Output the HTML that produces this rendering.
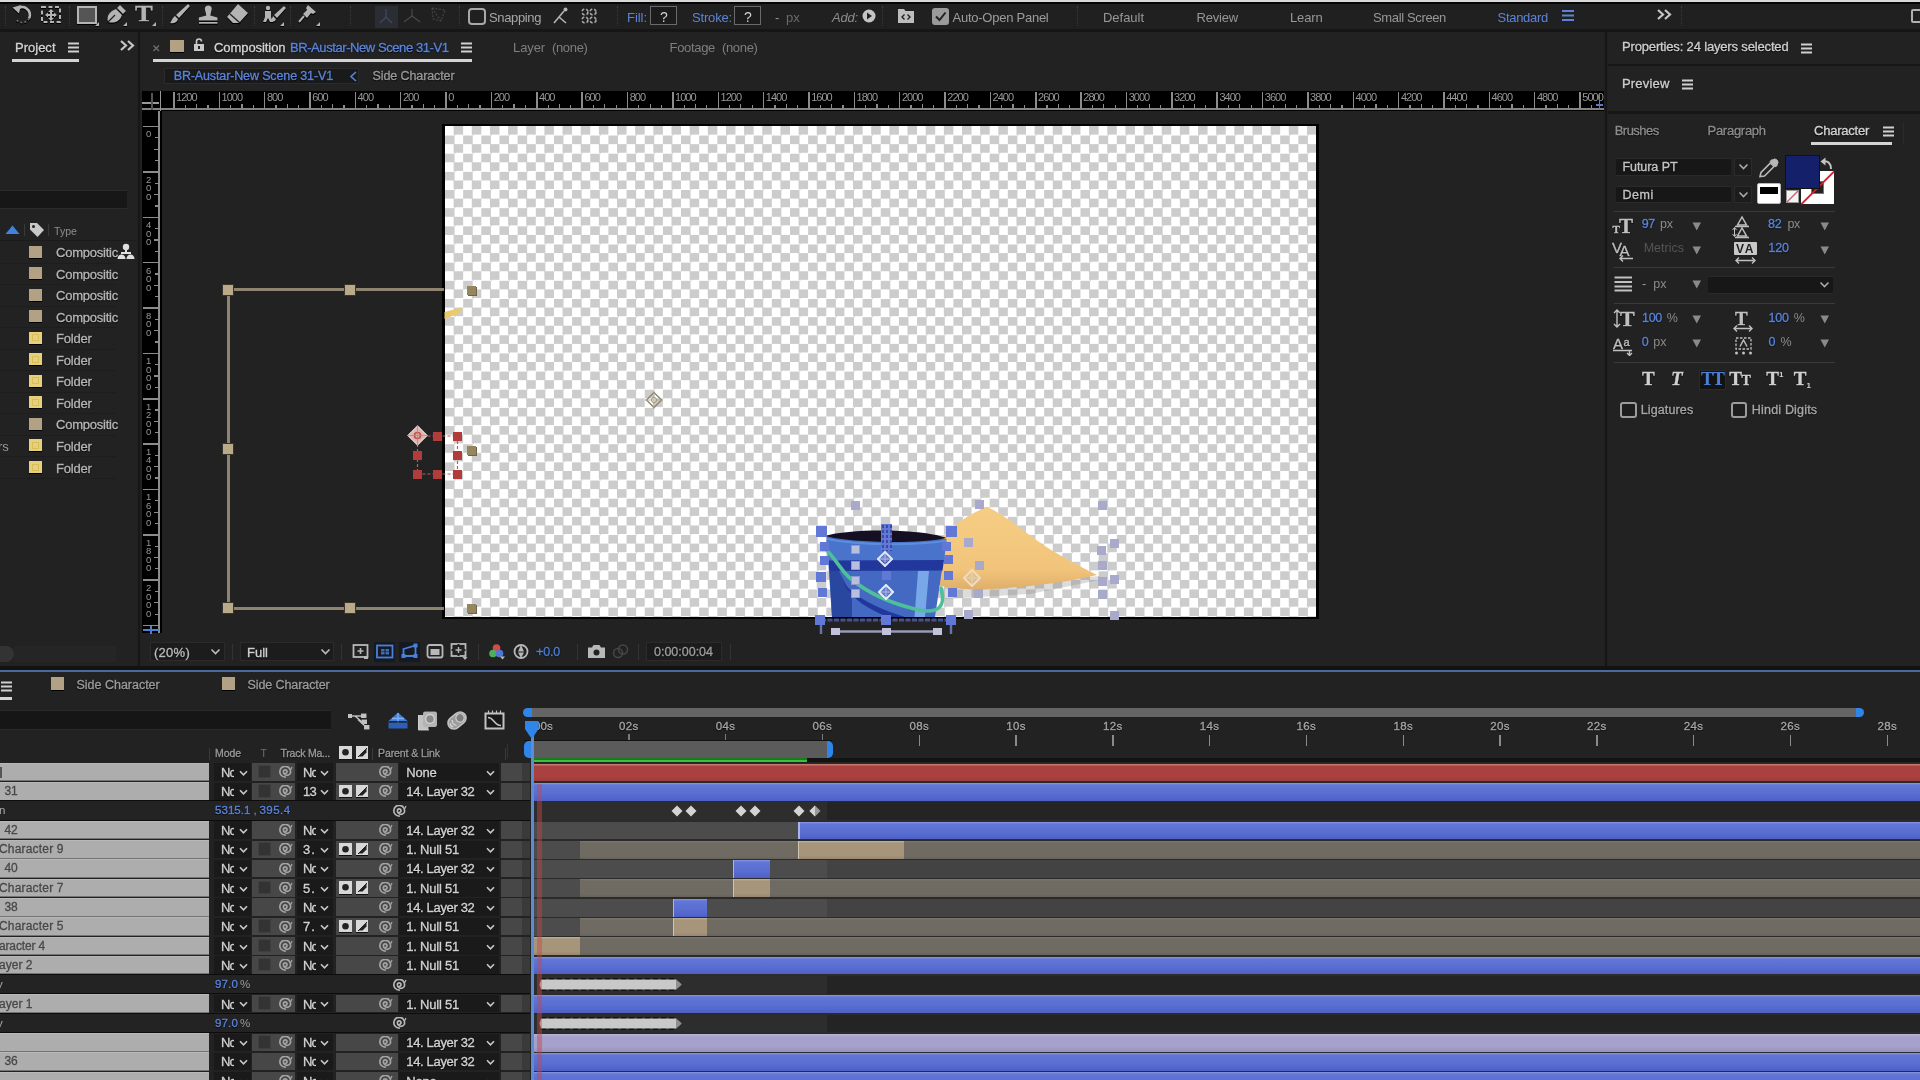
<!DOCTYPE html>
<html><head><meta charset="utf-8"><title>After Effects</title>
<style>
html,body{margin:0;padding:0;background:#222;}
body{width:1920px;height:1080px;position:relative;overflow:hidden;font-family:"Liberation Sans",sans-serif;}
div,svg{position:absolute;box-sizing:border-box;}
.t{white-space:nowrap;line-height:1;letter-spacing:-0.2px;}
.sh{text-shadow:0 0 1px #000,0 1px 1px #000;-webkit-text-stroke:0.35px;}
</style></head>
<body>
<div id="w" style="left:0;top:0;width:1920px;height:1080px;will-change:transform;overflow:hidden;">
<!-- top -->
<div style="left:0px;top:0px;width:1920px;height:2px;background:#d9d9d9;"></div>
<div style="left:0px;top:2px;width:1920px;height:2px;background:#050505;"></div>
<div style="left:0px;top:4px;width:1920px;height:26px;background:#202020;"></div>
<div style="left:0px;top:29px;width:1920px;height:3px;background:#161616;"></div>
<div style="left:5px;top:6px;width:1px;height:20px;border-left:1px dotted #3a3a3a;"></div>
<div style="left:69px;top:6px;width:1px;height:20px;border-left:1px dotted #3a3a3a;"></div>
<div style="left:162px;top:6px;width:1px;height:20px;border-left:1px dotted #3a3a3a;"></div>
<div style="left:254px;top:6px;width:1px;height:20px;border-left:1px dotted #3a3a3a;"></div>
<div style="left:290px;top:6px;width:1px;height:20px;border-left:1px dotted #3a3a3a;"></div>
<div style="left:350px;top:6px;width:1px;height:20px;border-left:1px dotted #3a3a3a;"></div>
<div style="left:459px;top:6px;width:1px;height:20px;border-left:1px dotted #3a3a3a;"></div>
<div style="left:617px;top:6px;width:1px;height:20px;border-left:1px dotted #3a3a3a;"></div>
<div style="left:882px;top:6px;width:1px;height:20px;border-left:1px dotted #3a3a3a;"></div>
<div style="left:1077px;top:6px;width:1px;height:20px;border-left:1px dotted #3a3a3a;"></div>
<div style="left:1681px;top:6px;width:1px;height:20px;border-left:1px dotted #3a3a3a;"></div>
<svg style="left:0px;top:0px;filter:drop-shadow(0 0 0.7px #000) drop-shadow(0 1px 0.5px #000);" width="330" height="32" viewBox="0 0 330 32"><path d="M16 10 A7.800 7.800 0 0 1 29 18.500" fill="none" stroke="#b4b4b4" stroke-width="2.600"/><path d="M29 18.500 A7.800 7.800 0 0 1 15.500 18.500" fill="none" stroke="#6a6a6a" stroke-width="2" stroke-dasharray="2 2"/><path d="M12.500 7.500 L21 5 L19 13.500 Z" fill="#b4b4b4"/><rect x="42" y="7" width="18" height="15" fill="none" stroke="#b4b4b4" stroke-width="2" stroke-dasharray="4 2.5"/><path d="M51 9 L54 12 L52 12 L52 14 L54 14 L54 12.5 L57 15 L54 17.5 L54 16 L52 16 L52 18 L54 18 L51 21 L48 18 L50 18 L50 16 L48 16 L48 17.5 L45 15 L48 12.5 L48 14 L50 14 L50 12 L48 12 Z" fill="#b4b4b4"/><rect x="78" y="7" width="18" height="16" fill="#555" stroke="#b4b4b4" stroke-width="2"/><path d="M99 22 L99 26 L95 26 Z" fill="#b4b4b4"/><path d="M108 22 C106 16 110 11 116 9 L122 15 C120 21 115 24 108 22 Z" fill="#b4b4b4"/><path d="M117 8 L120 5 L126 11 L123 14 Z" fill="#b4b4b4"/><path d="M108 22 L115 15" stroke="#222" stroke-width="1.2"/><path d="M127 22 L127 26 L123 26 Z" fill="#b4b4b4"/><path d="M188 4 L190 6 L179 18 L176 15 Z" fill="#b4b4b4"/><path d="M175 16 L178 19 C177 23 173 24 170 23 C172 21 172 18 175 16 Z" fill="#b4b4b4"/><path d="M204.800 9 a3.500 3.500 0 1 1 7 0 L210.300 15.500 L217.500 17.500 L217.500 20.500 L198.800 20.500 L198.800 17.500 L206.300 15.500 Z" fill="#b4b4b4"/><rect x="199" y="22" width="18.500" height="1.700" fill="#b4b4b4"/><path d="M238 4 L248 13 L239 23 L233 23 L227 17 Z" fill="#b4b4b4"/><path d="M230 14 L240 23" stroke="#222" stroke-width="1.3"/><circle cx="268" cy="8" r="2.2" fill="#b4b4b4"/><path d="M265 11 L271 11 L271 17 L273 22 L270 22 L268 18 L266 22 L263 22 L265 17 Z" fill="#b4b4b4"/><path d="M284 6 L286 8 L277 18 L274 15 Z" fill="#b4b4b4"/><path d="M273 16 L276 19 C275 22 273 22 271 21 Z" fill="#b4b4b4"/><path d="M284 22 L284 26 L280 26 Z" fill="#b4b4b4"/><path d="M308 5 L316 12 L313 14 L311 13 L307 18 L303 14 L307 10 L306 8 Z" fill="#b4b4b4"/><path d="M304 16 L299 22" stroke="#b4b4b4" stroke-width="2"/><path d="M320 22 L320 26 L316 26 Z" fill="#b4b4b4"/></svg>
<div class="t sh" style="left:134.5px;top:2.41px;font-size:23.5px;color:#b4b4b4;font-weight:bold;font-family:'Liberation Serif',serif;transform-origin:0 50%;transform:scaleX(1.13);">T</div>
<svg style="left:150px;top:20px;" width="8" height="8" viewBox="0 0 8 8"><path d="M6 2 L6 6 L2 6 Z" fill="#b4b4b4"/></svg>
<div style="left:375px;top:6px;width:23px;height:22px;background:#2a2d33;"></div>
<svg style="left:370px;top:0px;" width="90" height="32" viewBox="0 0 90 32"><path d="M386 9 L386 17 L380 23 M386 17 L392 23" stroke="#3e4656" stroke-width="1.5" fill="none" transform="translate(-370,0)"/><path d="M412 9 L412 16 L404 22 M412 16 L420 22" stroke="#4a4a4a" stroke-width="1.2" fill="none" transform="translate(-370,0)"/><path d="M432 8 L445 10 L441 21 L433 19 Z M432 8 L441 21" stroke="#444" stroke-width="1.2" stroke-dasharray="2 1.5" fill="none" transform="translate(-370,0)"/></svg>
<div style="left:468px;top:8px;width:18px;height:17px;border:2.5px solid #a8a8a8;border-radius:4px;"></div>
<div class="t" style="left:489px;top:11.00px;font-size:13px;color:#a6a6a6;letter-spacing:-0.368px;">Snapping</div>
<svg style="left:550px;top:4px;" width="50" height="24" viewBox="0 0 50 24"><path d="M4 19 L14 7 M9 13 L16 19" stroke="#b4b4b4" stroke-width="1.6" fill="none"/><circle cx="15.5" cy="5.5" r="2" fill="#b4b4b4"/><g fill="none" stroke="#aaa" stroke-width="1.6" stroke-dasharray="3 2"><circle cx="35" cy="8" r="3"/><circle cx="43" cy="8" r="3"/><circle cx="35" cy="16" r="3"/><circle cx="43" cy="16" r="3"/></g></svg>
<div class="t" style="left:627px;top:11.00px;font-size:13px;color:#5b84d8;letter-spacing:-0.044px;">Fill:</div>
<div style="left:650px;top:6px;width:27px;height:19px;background:#1c1c1c;border:1.5px solid #6a6a6a;"></div>
<div class="t" style="left:660px;top:10.15px;font-size:14px;color:#d0d0d0;">?</div>
<div class="t" style="left:692px;top:11.00px;font-size:13px;color:#5b84d8;letter-spacing:-0.169px;">Stroke:</div>
<div style="left:734px;top:6px;width:27px;height:19px;background:#1c1c1c;border:1.5px solid #6a6a6a;"></div>
<div class="t" style="left:744px;top:10.15px;font-size:14px;color:#d0d0d0;">?</div>
<div class="t" style="left:775px;top:11.00px;font-size:13px;color:#999;">-</div>
<div class="t" style="left:786px;top:11.00px;font-size:13px;color:#6a6a6a;letter-spacing:0.135px;">px</div>
<div class="t" style="left:832px;top:11.00px;font-size:13px;color:#8c8c8c;letter-spacing:-0.186px;font-style:italic;">Add:</div>
<svg style="left:861px;top:8px;" width="16" height="16" viewBox="0 0 16 16"><circle cx="8" cy="8" r="6.5" fill="#c4c4c4"/><path d="M6 4.500 L11 8 L6 11.500 Z" fill="#222"/></svg>
<svg style="left:897px;top:6px;" width="20" height="20" viewBox="0 0 20 20"><path d="M1 3 L7 3 L8.500 5 L17 5 L17 17 L1 17 Z" fill="#bdbdbd"/><path d="M7.500 8.500 L5 11 L7.500 13.500 M10.500 8.500 L13 11 L10.500 13.500" stroke="#222" stroke-width="1.4" fill="none"/></svg>
<div style="left:932px;top:8px;width:17px;height:17px;background:#9a9a9a;border-radius:3px;"></div>
<svg style="left:932px;top:8px;" width="17" height="17" viewBox="0 0 17 17"><path d="M4 8.500 L7.500 12 L13.500 4.500" stroke="#222" stroke-width="2" fill="none"/></svg>
<div class="t" style="left:952.5px;top:11.00px;font-size:13px;color:#9c9c9c;letter-spacing:-0.249px;">Auto-Open Panel</div>
<div class="t" style="left:1103px;top:11.00px;font-size:13px;color:#979797;letter-spacing:-0.027px;">Default</div>
<div class="t" style="left:1196.5px;top:11.00px;font-size:13px;color:#979797;letter-spacing:-0.188px;">Review</div>
<div class="t" style="left:1290px;top:11.00px;font-size:13px;color:#979797;letter-spacing:-0.150px;">Learn</div>
<div class="t" style="left:1373px;top:11.00px;font-size:13px;color:#979797;letter-spacing:-0.360px;">Small Screen</div>
<div class="t" style="left:1497.5px;top:11.00px;font-size:13px;color:#5b84d8;letter-spacing:-0.283px;">Standard</div>
<svg style="left:1562px;top:9px;" width="12" height="13" viewBox="0 0 12 13"><path d="M0 2 H12 M0 6.500 H12 M0 11 H12" stroke="#5b84d8" stroke-width="2"/></svg>
<svg style="left:1657px;top:9px;" width="15" height="12" viewBox="0 0 15 12"><path d="M1 1 L6 5.500 L1 10 M8 1 L13 5.500 L8 10" stroke="#c6c6c6" stroke-width="2.2" fill="none"/></svg>
<div style="left:1911px;top:9px;width:14px;height:14px;border:2px solid #b0b0b0;border-radius:2px;"></div>
<!-- project -->
<div style="left:0px;top:32px;width:137px;height:634px;background:#222222;"></div>
<div style="left:137px;top:32px;width:4px;height:634px;background:#202020;"></div>
<div style="left:137.7px;top:32px;width:2.8px;height:634px;background:#171717;"></div>
<div class="t sh" style="left:15px;top:41.30px;font-size:13px;color:#d2d2d2;letter-spacing:0.005px;">Project</div>
<svg style="left:68px;top:42px;" width="12" height="12" viewBox="0 0 12 12"><path d="M0 1.500 H11 M0 5.500 H11 M0 9.500 H11" stroke="#cfcfcf" stroke-width="2"/></svg>
<svg style="left:120px;top:40px;" width="15" height="12" viewBox="0 0 15 12"><path d="M1 1 L6 5.500 L1 10 M8 1 L13 5.500 L8 10" stroke="#c6c6c6" stroke-width="2.2" fill="none"/></svg>
<div style="left:12px;top:58.5px;width:67px;height:3px;background:#d4d4d4;"></div>
<div style="left:0px;top:190px;width:127px;height:19px;background:#171717;border-top:1px solid #2c2c2c;border-bottom:1px solid #2c2c2c;"></div>
<svg style="left:4px;top:224px;" width="17" height="11" viewBox="0 0 17 11"><path d="M1.500 10 L8.500 1.500 L15.500 10 Z" fill="#3f83dd"/></svg>
<div style="left:24px;top:224px;width:1px;height:12px;background:#3a3a3a;"></div>
<svg style="left:28px;top:221px;" width="18" height="18" viewBox="0 0 18 18"><path d="M2 2 L9 2 L16 9 L9.500 16 L2 8.500 Z" fill="#c9c9c9"/><circle cx="5.500" cy="5.500" r="1.500" fill="#222"/></svg>
<div style="left:48px;top:224px;width:1px;height:12px;background:#3a3a3a;"></div>
<div class="t" style="left:54px;top:225.61px;font-size:10.5px;color:#8e8e8e;letter-spacing:0.059px;">Type</div>
<div style="left:0px;top:240px;width:137px;height:1px;background:#1b1b1b;"></div>
<div style="left:29px;top:245.7px;width:12.5px;height:12px;background:#b3a184;box-shadow:0 1px 0 #000;"></div>
<div class="t sh" style="left:56px;top:246.20px;font-size:13px;color:#b5b5b5;letter-spacing:-0.230px;width:62px;overflow:hidden;">Compositic</div>
<div style="left:0px;top:262.7px;width:116px;height:1px;background:#1d1d1d;"></div>
<div style="left:29px;top:267.23px;width:12.5px;height:12px;background:#b3a184;box-shadow:0 1px 0 #000;"></div>
<div class="t sh" style="left:56px;top:267.73px;font-size:13px;color:#b5b5b5;letter-spacing:-0.230px;width:62px;overflow:hidden;">Compositic</div>
<div style="left:0px;top:284.23px;width:116px;height:1px;background:#1d1d1d;"></div>
<div style="left:29px;top:288.76px;width:12.5px;height:12px;background:#b3a184;box-shadow:0 1px 0 #000;"></div>
<div class="t sh" style="left:56px;top:289.26px;font-size:13px;color:#b5b5b5;letter-spacing:-0.230px;width:62px;overflow:hidden;">Compositic</div>
<div style="left:0px;top:305.76px;width:116px;height:1px;background:#1d1d1d;"></div>
<div style="left:29px;top:310.28999999999996px;width:12.5px;height:12px;background:#b3a184;box-shadow:0 1px 0 #000;"></div>
<div class="t sh" style="left:56px;top:310.79px;font-size:13px;color:#b5b5b5;letter-spacing:-0.230px;width:62px;overflow:hidden;">Compositic</div>
<div style="left:0px;top:327.28999999999996px;width:116px;height:1px;background:#1d1d1d;"></div>
<div style="left:29px;top:331.82px;width:12.5px;height:12px;background:#e6d07c;box-shadow:0 1px 0 #000;"></div>
<div style="left:31.5px;top:334.32px;width:7.5px;height:7px;border:1px solid #d9bd5c;"></div>
<div class="t sh" style="left:56px;top:332.32px;font-size:13px;color:#b5b5b5;letter-spacing:-0.225px;">Folder</div>
<div style="left:0px;top:348.82px;width:116px;height:1px;background:#1d1d1d;"></div>
<div style="left:29px;top:353.35px;width:12.5px;height:12px;background:#e6d07c;box-shadow:0 1px 0 #000;"></div>
<div style="left:31.5px;top:355.85px;width:7.5px;height:7px;border:1px solid #d9bd5c;"></div>
<div class="t sh" style="left:56px;top:353.85px;font-size:13px;color:#b5b5b5;letter-spacing:-0.225px;">Folder</div>
<div style="left:0px;top:370.35px;width:116px;height:1px;background:#1d1d1d;"></div>
<div style="left:29px;top:374.88px;width:12.5px;height:12px;background:#e6d07c;box-shadow:0 1px 0 #000;"></div>
<div style="left:31.5px;top:377.38px;width:7.5px;height:7px;border:1px solid #d9bd5c;"></div>
<div class="t sh" style="left:56px;top:375.38px;font-size:13px;color:#b5b5b5;letter-spacing:-0.225px;">Folder</div>
<div style="left:0px;top:391.88px;width:116px;height:1px;background:#1d1d1d;"></div>
<div style="left:29px;top:396.40999999999997px;width:12.5px;height:12px;background:#e6d07c;box-shadow:0 1px 0 #000;"></div>
<div style="left:31.5px;top:398.90999999999997px;width:7.5px;height:7px;border:1px solid #d9bd5c;"></div>
<div class="t sh" style="left:56px;top:396.91px;font-size:13px;color:#b5b5b5;letter-spacing:-0.225px;">Folder</div>
<div style="left:0px;top:413.40999999999997px;width:116px;height:1px;background:#1d1d1d;"></div>
<div style="left:29px;top:417.94px;width:12.5px;height:12px;background:#b3a184;box-shadow:0 1px 0 #000;"></div>
<div class="t sh" style="left:56px;top:418.44px;font-size:13px;color:#b5b5b5;letter-spacing:-0.230px;width:62px;overflow:hidden;">Compositic</div>
<div style="left:0px;top:434.94px;width:116px;height:1px;background:#1d1d1d;"></div>
<div style="left:29px;top:439.47px;width:12.5px;height:12px;background:#e6d07c;box-shadow:0 1px 0 #000;"></div>
<div style="left:31.5px;top:441.97px;width:7.5px;height:7px;border:1px solid #d9bd5c;"></div>
<div class="t sh" style="left:56px;top:439.97px;font-size:13px;color:#b5b5b5;letter-spacing:-0.225px;">Folder</div>
<div style="left:0px;top:456.47px;width:116px;height:1px;background:#1d1d1d;"></div>
<div style="left:29px;top:461.0px;width:12.5px;height:12px;background:#e6d07c;box-shadow:0 1px 0 #000;"></div>
<div style="left:31.5px;top:463.5px;width:7.5px;height:7px;border:1px solid #d9bd5c;"></div>
<div class="t sh" style="left:56px;top:461.50px;font-size:13px;color:#b5b5b5;letter-spacing:-0.225px;">Folder</div>
<div style="left:0px;top:478.0px;width:116px;height:1px;background:#1d1d1d;"></div>
<svg style="left:117px;top:243px;" width="18" height="17" viewBox="0 0 18 17"><circle cx="9" cy="4" r="3.200" fill="#dedede"/><path d="M9 6 L9 10 M4 10 L14 10" stroke="#dedede" stroke-width="2"/><path d="M0.500 16 a4 4.500 0 0 1 8 0 Z M9.500 16 a4 4.500 0 0 1 8 0 Z" fill="#dedede"/></svg>
<div class="t" style="left:-2px;top:439.80px;font-size:13px;color:#9a9a9a;">rs</div>
<div style="left:-10px;top:646px;width:24px;height:16px;background:#333;border-radius:8px;"></div>
<div style="left:14px;top:646px;width:102px;height:16px;background:#252525;"></div>
<!-- comp -->
<div style="left:141px;top:32px;width:1463px;height:634px;background:#222222;"></div>
<div style="left:1604px;top:32px;width:4px;height:634px;background:#202020;"></div>
<div style="left:1604.8px;top:32px;width:2.4px;height:634px;background:#161616;"></div>
<svg style="left:152px;top:44px;" width="9" height="9" viewBox="0 0 9 9"><path d="M1.500 1.500 L7 7 M7 1.500 L1.500 7" stroke="#6e6e6e" stroke-width="1.400"/></svg>
<div style="left:170px;top:39.5px;width:13.5px;height:12.5px;background:#b3a184;box-shadow:0 1px 0 #000;"></div>
<svg style="left:193px;top:38px;" width="12" height="14" viewBox="0 0 12 14"><path d="M3.500 6 L3.500 3.500 a2.500 2.500 0 0 1 5 0" fill="none" stroke="#c8c8c8" stroke-width="1.600"/><rect x="1" y="6" width="10" height="7" fill="#c8c8c8"/><rect x="5" y="8" width="2" height="3" fill="#222"/></svg>
<div class="t sh" style="left:214px;top:40.80px;font-size:13px;color:#d6d6d6;letter-spacing:-0.069px;">Composition</div>
<div class="t sh" style="left:290px;top:40.80px;font-size:13px;color:#5b84d8;letter-spacing:-0.423px;">BR-Austar-New Scene 31-V1</div>
<svg style="left:461px;top:42px;" width="12" height="12" viewBox="0 0 12 12"><path d="M0 1.500 H11 M0 5.500 H11 M0 9.500 H11" stroke="#cfcfcf" stroke-width="2"/></svg>
<div style="left:153px;top:58.5px;width:319px;height:3px;background:#d4d4d4;"></div>
<div class="t" style="left:513px;top:40.80px;font-size:13px;color:#7e7e7e;letter-spacing:-0.104px;">Layer</div>
<div class="t" style="left:552px;top:40.80px;font-size:13px;color:#7e7e7e;letter-spacing:-0.347px;">(none)</div>
<div class="t" style="left:669.5px;top:40.80px;font-size:13px;color:#7e7e7e;letter-spacing:-0.315px;">Footage</div>
<div class="t" style="left:722px;top:40.80px;font-size:13px;color:#7e7e7e;letter-spacing:-0.347px;">(none)</div>
<div style="left:164px;top:67.5px;width:195px;height:16.5px;background:#1a1a1a;border:1px solid #2b2b2b;"></div>
<div class="t sh" style="left:173.7px;top:69.72px;font-size:12.5px;color:#5b84d8;letter-spacing:-0.130px;">BR-Austar-New Scene 31-V1</div>
<svg style="left:349px;top:71px;" width="9" height="11" viewBox="0 0 9 11"><path d="M7 1 L2 5.500 L7 10" stroke="#5b84d8" stroke-width="1.600" fill="none"/></svg>
<div class="t sh" style="left:372.5px;top:69.72px;font-size:12.5px;color:#9a9a9a;letter-spacing:-0.098px;">Side Character</div>
<div style="left:141.5px;top:91px;width:1462px;height:20px;background:#000;"></div>
<div style="left:141.5px;top:108.3px;width:1462px;height:2.2px;background:#848484;"></div>
<div style="left:141.5px;top:111px;width:20px;height:522px;background:#000;"></div>
<div style="left:158.2px;top:111px;width:2.2px;height:522px;background:#8c8c8c;"></div>
<div style="left:142px;top:102px;width:17px;height:1.5px;background:#9a9a9a;"></div>
<div style="left:159.5px;top:91px;width:1.5px;height:20px;background:#9a9a9a;"></div>
<div style="left:151px;top:93px;width:1.5px;height:17px;background:#555;"></div>
<div style="left:173.1px;top:92px;width:1.6px;height:17px;background:#8c8c8c;"></div><div class="t" style="left:176.1px;top:92.29px;font-size:11px;color:#989898;letter-spacing:-0.992px;">1200</div><div style="left:184.6px;top:105.3px;width:1.3px;height:3px;background:#8c8c8c;"></div><div style="left:195.9px;top:104.3px;width:1.3px;height:4px;background:#8c8c8c;"></div><div style="left:207.3px;top:105.3px;width:1.3px;height:3px;background:#8c8c8c;"></div><div style="left:218.5px;top:92px;width:1.6px;height:17px;background:#8c8c8c;"></div><div class="t" style="left:221.5px;top:92.29px;font-size:11px;color:#989898;letter-spacing:-0.992px;">1000</div><div style="left:229.9px;top:105.3px;width:1.3px;height:3px;background:#8c8c8c;"></div><div style="left:241.3px;top:104.3px;width:1.3px;height:4px;background:#8c8c8c;"></div><div style="left:252.6px;top:105.3px;width:1.3px;height:3px;background:#8c8c8c;"></div><div style="left:263.9px;top:92px;width:1.6px;height:17px;background:#8c8c8c;"></div><div class="t" style="left:266.9px;top:92.29px;font-size:11px;color:#989898;letter-spacing:-0.951px;">800</div><div style="left:275.3px;top:105.3px;width:1.3px;height:3px;background:#8c8c8c;"></div><div style="left:286.6px;top:104.3px;width:1.3px;height:4px;background:#8c8c8c;"></div><div style="left:298.0px;top:105.3px;width:1.3px;height:3px;background:#8c8c8c;"></div><div style="left:309.2px;top:92px;width:1.6px;height:17px;background:#8c8c8c;"></div><div class="t" style="left:312.2px;top:92.29px;font-size:11px;color:#989898;letter-spacing:-0.951px;">600</div><div style="left:320.7px;top:105.3px;width:1.3px;height:3px;background:#8c8c8c;"></div><div style="left:332.0px;top:104.3px;width:1.3px;height:4px;background:#8c8c8c;"></div><div style="left:343.3px;top:105.3px;width:1.3px;height:3px;background:#8c8c8c;"></div><div style="left:354.6px;top:92px;width:1.6px;height:17px;background:#8c8c8c;"></div><div class="t" style="left:357.6px;top:92.29px;font-size:11px;color:#989898;letter-spacing:-0.951px;">400</div><div style="left:366.0px;top:105.3px;width:1.3px;height:3px;background:#8c8c8c;"></div><div style="left:377.4px;top:104.3px;width:1.3px;height:4px;background:#8c8c8c;"></div><div style="left:388.7px;top:105.3px;width:1.3px;height:3px;background:#8c8c8c;"></div><div style="left:399.9px;top:92px;width:1.6px;height:17px;background:#8c8c8c;"></div><div class="t" style="left:402.9px;top:92.29px;font-size:11px;color:#989898;letter-spacing:-0.951px;">200</div><div style="left:411.4px;top:105.3px;width:1.3px;height:3px;background:#8c8c8c;"></div><div style="left:422.7px;top:104.3px;width:1.3px;height:4px;background:#8c8c8c;"></div><div style="left:434.1px;top:105.3px;width:1.3px;height:3px;background:#8c8c8c;"></div><div style="left:445.3px;top:92px;width:1.6px;height:17px;background:#8c8c8c;"></div><div class="t" style="left:448.3px;top:92.29px;font-size:11px;color:#989898;letter-spacing:-0.917px;">0</div><div style="left:456.7px;top:105.3px;width:1.3px;height:3px;background:#8c8c8c;"></div><div style="left:468.1px;top:104.3px;width:1.3px;height:4px;background:#8c8c8c;"></div><div style="left:479.4px;top:105.3px;width:1.3px;height:3px;background:#8c8c8c;"></div><div style="left:490.7px;top:92px;width:1.6px;height:17px;background:#8c8c8c;"></div><div class="t" style="left:493.7px;top:92.29px;font-size:11px;color:#989898;letter-spacing:-0.951px;">200</div><div style="left:502.1px;top:105.3px;width:1.3px;height:3px;background:#8c8c8c;"></div><div style="left:513.4px;top:104.3px;width:1.3px;height:4px;background:#8c8c8c;"></div><div style="left:524.8px;top:105.3px;width:1.3px;height:3px;background:#8c8c8c;"></div><div style="left:536.0px;top:92px;width:1.6px;height:17px;background:#8c8c8c;"></div><div class="t" style="left:539.0px;top:92.29px;font-size:11px;color:#989898;letter-spacing:-0.951px;">400</div><div style="left:547.5px;top:105.3px;width:1.3px;height:3px;background:#8c8c8c;"></div><div style="left:558.8px;top:104.3px;width:1.3px;height:4px;background:#8c8c8c;"></div><div style="left:570.1px;top:105.3px;width:1.3px;height:3px;background:#8c8c8c;"></div><div style="left:581.4px;top:92px;width:1.6px;height:17px;background:#8c8c8c;"></div><div class="t" style="left:584.4px;top:92.29px;font-size:11px;color:#989898;letter-spacing:-0.951px;">600</div><div style="left:592.8px;top:105.3px;width:1.3px;height:3px;background:#8c8c8c;"></div><div style="left:604.2px;top:104.3px;width:1.3px;height:4px;background:#8c8c8c;"></div><div style="left:615.5px;top:105.3px;width:1.3px;height:3px;background:#8c8c8c;"></div><div style="left:626.7px;top:92px;width:1.6px;height:17px;background:#8c8c8c;"></div><div class="t" style="left:629.7px;top:92.29px;font-size:11px;color:#989898;letter-spacing:-0.951px;">800</div><div style="left:638.2px;top:105.3px;width:1.3px;height:3px;background:#8c8c8c;"></div><div style="left:649.5px;top:104.3px;width:1.3px;height:4px;background:#8c8c8c;"></div><div style="left:660.9px;top:105.3px;width:1.3px;height:3px;background:#8c8c8c;"></div><div style="left:672.1px;top:92px;width:1.6px;height:17px;background:#8c8c8c;"></div><div class="t" style="left:675.1px;top:92.29px;font-size:11px;color:#989898;letter-spacing:-0.992px;">1000</div><div style="left:683.5px;top:105.3px;width:1.3px;height:3px;background:#8c8c8c;"></div><div style="left:694.9px;top:104.3px;width:1.3px;height:4px;background:#8c8c8c;"></div><div style="left:706.2px;top:105.3px;width:1.3px;height:3px;background:#8c8c8c;"></div><div style="left:717.5px;top:92px;width:1.6px;height:17px;background:#8c8c8c;"></div><div class="t" style="left:720.5px;top:92.29px;font-size:11px;color:#989898;letter-spacing:-0.992px;">1200</div><div style="left:728.9px;top:105.3px;width:1.3px;height:3px;background:#8c8c8c;"></div><div style="left:740.2px;top:104.3px;width:1.3px;height:4px;background:#8c8c8c;"></div><div style="left:751.6px;top:105.3px;width:1.3px;height:3px;background:#8c8c8c;"></div><div style="left:762.8px;top:92px;width:1.6px;height:17px;background:#8c8c8c;"></div><div class="t" style="left:765.8px;top:92.29px;font-size:11px;color:#989898;letter-spacing:-0.992px;">1400</div><div style="left:774.3px;top:105.3px;width:1.3px;height:3px;background:#8c8c8c;"></div><div style="left:785.6px;top:104.3px;width:1.3px;height:4px;background:#8c8c8c;"></div><div style="left:796.9px;top:105.3px;width:1.3px;height:3px;background:#8c8c8c;"></div><div style="left:808.2px;top:92px;width:1.6px;height:17px;background:#8c8c8c;"></div><div class="t" style="left:811.2px;top:92.29px;font-size:11px;color:#989898;letter-spacing:-0.992px;">1600</div><div style="left:819.6px;top:105.3px;width:1.3px;height:3px;background:#8c8c8c;"></div><div style="left:831.0px;top:104.3px;width:1.3px;height:4px;background:#8c8c8c;"></div><div style="left:842.3px;top:105.3px;width:1.3px;height:3px;background:#8c8c8c;"></div><div style="left:853.5px;top:92px;width:1.6px;height:17px;background:#8c8c8c;"></div><div class="t" style="left:856.5px;top:92.29px;font-size:11px;color:#989898;letter-spacing:-0.992px;">1800</div><div style="left:865.0px;top:105.3px;width:1.3px;height:3px;background:#8c8c8c;"></div><div style="left:876.3px;top:104.3px;width:1.3px;height:4px;background:#8c8c8c;"></div><div style="left:887.7px;top:105.3px;width:1.3px;height:3px;background:#8c8c8c;"></div><div style="left:898.9px;top:92px;width:1.6px;height:17px;background:#8c8c8c;"></div><div class="t" style="left:901.9px;top:92.29px;font-size:11px;color:#989898;letter-spacing:-0.992px;">2000</div><div style="left:910.3px;top:105.3px;width:1.3px;height:3px;background:#8c8c8c;"></div><div style="left:921.7px;top:104.3px;width:1.3px;height:4px;background:#8c8c8c;"></div><div style="left:933.0px;top:105.3px;width:1.3px;height:3px;background:#8c8c8c;"></div><div style="left:944.3px;top:92px;width:1.6px;height:17px;background:#8c8c8c;"></div><div class="t" style="left:947.3px;top:92.29px;font-size:11px;color:#989898;letter-spacing:-0.992px;">2200</div><div style="left:955.7px;top:105.3px;width:1.3px;height:3px;background:#8c8c8c;"></div><div style="left:967.0px;top:104.3px;width:1.3px;height:4px;background:#8c8c8c;"></div><div style="left:978.4px;top:105.3px;width:1.3px;height:3px;background:#8c8c8c;"></div><div style="left:989.6px;top:92px;width:1.6px;height:17px;background:#8c8c8c;"></div><div class="t" style="left:992.6px;top:92.29px;font-size:11px;color:#989898;letter-spacing:-0.992px;">2400</div><div style="left:1001.1px;top:105.3px;width:1.3px;height:3px;background:#8c8c8c;"></div><div style="left:1012.4px;top:104.3px;width:1.3px;height:4px;background:#8c8c8c;"></div><div style="left:1023.7px;top:105.3px;width:1.3px;height:3px;background:#8c8c8c;"></div><div style="left:1035.0px;top:92px;width:1.6px;height:17px;background:#8c8c8c;"></div><div class="t" style="left:1038.0px;top:92.29px;font-size:11px;color:#989898;letter-spacing:-0.992px;">2600</div><div style="left:1046.4px;top:105.3px;width:1.3px;height:3px;background:#8c8c8c;"></div><div style="left:1057.8px;top:104.3px;width:1.3px;height:4px;background:#8c8c8c;"></div><div style="left:1069.1px;top:105.3px;width:1.3px;height:3px;background:#8c8c8c;"></div><div style="left:1080.3px;top:92px;width:1.6px;height:17px;background:#8c8c8c;"></div><div class="t" style="left:1083.3px;top:92.29px;font-size:11px;color:#989898;letter-spacing:-0.992px;">2800</div><div style="left:1091.8px;top:105.3px;width:1.3px;height:3px;background:#8c8c8c;"></div><div style="left:1103.1px;top:104.3px;width:1.3px;height:4px;background:#8c8c8c;"></div><div style="left:1114.5px;top:105.3px;width:1.3px;height:3px;background:#8c8c8c;"></div><div style="left:1125.7px;top:92px;width:1.6px;height:17px;background:#8c8c8c;"></div><div class="t" style="left:1128.7px;top:92.29px;font-size:11px;color:#989898;letter-spacing:-0.992px;">3000</div><div style="left:1137.1px;top:105.3px;width:1.3px;height:3px;background:#8c8c8c;"></div><div style="left:1148.5px;top:104.3px;width:1.3px;height:4px;background:#8c8c8c;"></div><div style="left:1159.8px;top:105.3px;width:1.3px;height:3px;background:#8c8c8c;"></div><div style="left:1171.1px;top:92px;width:1.6px;height:17px;background:#8c8c8c;"></div><div class="t" style="left:1174.1px;top:92.29px;font-size:11px;color:#989898;letter-spacing:-0.992px;">3200</div><div style="left:1182.5px;top:105.3px;width:1.3px;height:3px;background:#8c8c8c;"></div><div style="left:1193.8px;top:104.3px;width:1.3px;height:4px;background:#8c8c8c;"></div><div style="left:1205.2px;top:105.3px;width:1.3px;height:3px;background:#8c8c8c;"></div><div style="left:1216.4px;top:92px;width:1.6px;height:17px;background:#8c8c8c;"></div><div class="t" style="left:1219.4px;top:92.29px;font-size:11px;color:#989898;letter-spacing:-0.992px;">3400</div><div style="left:1227.9px;top:105.3px;width:1.3px;height:3px;background:#8c8c8c;"></div><div style="left:1239.2px;top:104.3px;width:1.3px;height:4px;background:#8c8c8c;"></div><div style="left:1250.5px;top:105.3px;width:1.3px;height:3px;background:#8c8c8c;"></div><div style="left:1261.8px;top:92px;width:1.6px;height:17px;background:#8c8c8c;"></div><div class="t" style="left:1264.8px;top:92.29px;font-size:11px;color:#989898;letter-spacing:-0.992px;">3600</div><div style="left:1273.2px;top:105.3px;width:1.3px;height:3px;background:#8c8c8c;"></div><div style="left:1284.6px;top:104.3px;width:1.3px;height:4px;background:#8c8c8c;"></div><div style="left:1295.9px;top:105.3px;width:1.3px;height:3px;background:#8c8c8c;"></div><div style="left:1307.1px;top:92px;width:1.6px;height:17px;background:#8c8c8c;"></div><div class="t" style="left:1310.1px;top:92.29px;font-size:11px;color:#989898;letter-spacing:-0.992px;">3800</div><div style="left:1318.6px;top:105.3px;width:1.3px;height:3px;background:#8c8c8c;"></div><div style="left:1329.9px;top:104.3px;width:1.3px;height:4px;background:#8c8c8c;"></div><div style="left:1341.3px;top:105.3px;width:1.3px;height:3px;background:#8c8c8c;"></div><div style="left:1352.5px;top:92px;width:1.6px;height:17px;background:#8c8c8c;"></div><div class="t" style="left:1355.5px;top:92.29px;font-size:11px;color:#989898;letter-spacing:-0.992px;">4000</div><div style="left:1363.9px;top:105.3px;width:1.3px;height:3px;background:#8c8c8c;"></div><div style="left:1375.3px;top:104.3px;width:1.3px;height:4px;background:#8c8c8c;"></div><div style="left:1386.6px;top:105.3px;width:1.3px;height:3px;background:#8c8c8c;"></div><div style="left:1397.9px;top:92px;width:1.6px;height:17px;background:#8c8c8c;"></div><div class="t" style="left:1400.9px;top:92.29px;font-size:11px;color:#989898;letter-spacing:-0.992px;">4200</div><div style="left:1409.3px;top:105.3px;width:1.3px;height:3px;background:#8c8c8c;"></div><div style="left:1420.6px;top:104.3px;width:1.3px;height:4px;background:#8c8c8c;"></div><div style="left:1432.0px;top:105.3px;width:1.3px;height:3px;background:#8c8c8c;"></div><div style="left:1443.2px;top:92px;width:1.6px;height:17px;background:#8c8c8c;"></div><div class="t" style="left:1446.2px;top:92.29px;font-size:11px;color:#989898;letter-spacing:-0.992px;">4400</div><div style="left:1454.7px;top:105.3px;width:1.3px;height:3px;background:#8c8c8c;"></div><div style="left:1466.0px;top:104.3px;width:1.3px;height:4px;background:#8c8c8c;"></div><div style="left:1477.3px;top:105.3px;width:1.3px;height:3px;background:#8c8c8c;"></div><div style="left:1488.6px;top:92px;width:1.6px;height:17px;background:#8c8c8c;"></div><div class="t" style="left:1491.6px;top:92.29px;font-size:11px;color:#989898;letter-spacing:-0.992px;">4600</div><div style="left:1500.0px;top:105.3px;width:1.3px;height:3px;background:#8c8c8c;"></div><div style="left:1511.4px;top:104.3px;width:1.3px;height:4px;background:#8c8c8c;"></div><div style="left:1522.7px;top:105.3px;width:1.3px;height:3px;background:#8c8c8c;"></div><div style="left:1533.9px;top:92px;width:1.6px;height:17px;background:#8c8c8c;"></div><div class="t" style="left:1536.9px;top:92.29px;font-size:11px;color:#989898;letter-spacing:-0.992px;">4800</div><div style="left:1545.4px;top:105.3px;width:1.3px;height:3px;background:#8c8c8c;"></div><div style="left:1556.7px;top:104.3px;width:1.3px;height:4px;background:#8c8c8c;"></div><div style="left:1568.1px;top:105.3px;width:1.3px;height:3px;background:#8c8c8c;"></div><div style="left:1579.3px;top:92px;width:1.6px;height:17px;background:#8c8c8c;"></div><div class="t" style="left:1582.3px;top:92.29px;font-size:11px;color:#989898;letter-spacing:-0.992px;">5000</div><div style="left:1590.7px;top:105.3px;width:1.3px;height:3px;background:#8c8c8c;"></div>
<div style="left:143px;top:125.8px;width:16px;height:1.6px;background:#8c8c8c;"></div><div class="t" style="left:146px;top:129.46px;font-size:9.5px;color:#989898;">0</div><div style="left:155.2px;top:137.2px;width:3px;height:1.3px;background:#8c8c8c;"></div><div style="left:154.2px;top:148.6px;width:4px;height:1.3px;background:#8c8c8c;"></div><div style="left:155.2px;top:159.9px;width:3px;height:1.3px;background:#8c8c8c;"></div><div style="left:143px;top:171.2px;width:16px;height:1.6px;background:#8c8c8c;"></div><div class="t" style="left:146px;top:174.86px;font-size:9.5px;color:#989898;">2</div><div class="t" style="left:146px;top:183.36px;font-size:9.5px;color:#989898;">0</div><div class="t" style="left:146px;top:191.86px;font-size:9.5px;color:#989898;">0</div><div style="left:155.2px;top:182.6px;width:3px;height:1.3px;background:#8c8c8c;"></div><div style="left:154.2px;top:193.9px;width:4px;height:1.3px;background:#8c8c8c;"></div><div style="left:155.2px;top:205.3px;width:3px;height:1.3px;background:#8c8c8c;"></div><div style="left:143px;top:216.5px;width:16px;height:1.6px;background:#8c8c8c;"></div><div class="t" style="left:146px;top:220.16px;font-size:9.5px;color:#989898;">4</div><div class="t" style="left:146px;top:228.66px;font-size:9.5px;color:#989898;">0</div><div class="t" style="left:146px;top:237.16px;font-size:9.5px;color:#989898;">0</div><div style="left:155.2px;top:228.0px;width:3px;height:1.3px;background:#8c8c8c;"></div><div style="left:154.2px;top:239.3px;width:4px;height:1.3px;background:#8c8c8c;"></div><div style="left:155.2px;top:250.6px;width:3px;height:1.3px;background:#8c8c8c;"></div><div style="left:143px;top:261.9px;width:16px;height:1.6px;background:#8c8c8c;"></div><div class="t" style="left:146px;top:265.56px;font-size:9.5px;color:#989898;">6</div><div class="t" style="left:146px;top:274.06px;font-size:9.5px;color:#989898;">0</div><div class="t" style="left:146px;top:282.56px;font-size:9.5px;color:#989898;">0</div><div style="left:155.2px;top:273.3px;width:3px;height:1.3px;background:#8c8c8c;"></div><div style="left:154.2px;top:284.7px;width:4px;height:1.3px;background:#8c8c8c;"></div><div style="left:155.2px;top:296.0px;width:3px;height:1.3px;background:#8c8c8c;"></div><div style="left:143px;top:307.2px;width:16px;height:1.6px;background:#8c8c8c;"></div><div class="t" style="left:146px;top:310.86px;font-size:9.5px;color:#989898;">8</div><div class="t" style="left:146px;top:319.36px;font-size:9.5px;color:#989898;">0</div><div class="t" style="left:146px;top:327.86px;font-size:9.5px;color:#989898;">0</div><div style="left:155.2px;top:318.7px;width:3px;height:1.3px;background:#8c8c8c;"></div><div style="left:154.2px;top:330.0px;width:4px;height:1.3px;background:#8c8c8c;"></div><div style="left:155.2px;top:341.4px;width:3px;height:1.3px;background:#8c8c8c;"></div><div style="left:143px;top:352.6px;width:16px;height:1.6px;background:#8c8c8c;"></div><div class="t" style="left:146px;top:356.26px;font-size:9.5px;color:#989898;">1</div><div class="t" style="left:146px;top:364.76px;font-size:9.5px;color:#989898;">0</div><div class="t" style="left:146px;top:373.26px;font-size:9.5px;color:#989898;">0</div><div class="t" style="left:146px;top:381.76px;font-size:9.5px;color:#989898;">0</div><div style="left:155.2px;top:364.0px;width:3px;height:1.3px;background:#8c8c8c;"></div><div style="left:154.2px;top:375.4px;width:4px;height:1.3px;background:#8c8c8c;"></div><div style="left:155.2px;top:386.7px;width:3px;height:1.3px;background:#8c8c8c;"></div><div style="left:143px;top:398.0px;width:16px;height:1.6px;background:#8c8c8c;"></div><div class="t" style="left:146px;top:401.66px;font-size:9.5px;color:#989898;">1</div><div class="t" style="left:146px;top:410.16px;font-size:9.5px;color:#989898;">2</div><div class="t" style="left:146px;top:418.66px;font-size:9.5px;color:#989898;">0</div><div class="t" style="left:146px;top:427.16px;font-size:9.5px;color:#989898;">0</div><div style="left:155.2px;top:409.4px;width:3px;height:1.3px;background:#8c8c8c;"></div><div style="left:154.2px;top:420.7px;width:4px;height:1.3px;background:#8c8c8c;"></div><div style="left:155.2px;top:432.1px;width:3px;height:1.3px;background:#8c8c8c;"></div><div style="left:143px;top:443.3px;width:16px;height:1.6px;background:#8c8c8c;"></div><div class="t" style="left:146px;top:446.96px;font-size:9.5px;color:#989898;">1</div><div class="t" style="left:146px;top:455.46px;font-size:9.5px;color:#989898;">4</div><div class="t" style="left:146px;top:463.96px;font-size:9.5px;color:#989898;">0</div><div class="t" style="left:146px;top:472.46px;font-size:9.5px;color:#989898;">0</div><div style="left:155.2px;top:454.8px;width:3px;height:1.3px;background:#8c8c8c;"></div><div style="left:154.2px;top:466.1px;width:4px;height:1.3px;background:#8c8c8c;"></div><div style="left:155.2px;top:477.4px;width:3px;height:1.3px;background:#8c8c8c;"></div><div style="left:143px;top:488.7px;width:16px;height:1.6px;background:#8c8c8c;"></div><div class="t" style="left:146px;top:492.36px;font-size:9.5px;color:#989898;">1</div><div class="t" style="left:146px;top:500.86px;font-size:9.5px;color:#989898;">6</div><div class="t" style="left:146px;top:509.36px;font-size:9.5px;color:#989898;">0</div><div class="t" style="left:146px;top:517.86px;font-size:9.5px;color:#989898;">0</div><div style="left:155.2px;top:500.1px;width:3px;height:1.3px;background:#8c8c8c;"></div><div style="left:154.2px;top:511.5px;width:4px;height:1.3px;background:#8c8c8c;"></div><div style="left:155.2px;top:522.8px;width:3px;height:1.3px;background:#8c8c8c;"></div><div style="left:143px;top:534.0px;width:16px;height:1.6px;background:#8c8c8c;"></div><div class="t" style="left:146px;top:537.66px;font-size:9.5px;color:#989898;">1</div><div class="t" style="left:146px;top:546.16px;font-size:9.5px;color:#989898;">8</div><div class="t" style="left:146px;top:554.66px;font-size:9.5px;color:#989898;">0</div><div class="t" style="left:146px;top:563.16px;font-size:9.5px;color:#989898;">0</div><div style="left:155.2px;top:545.5px;width:3px;height:1.3px;background:#8c8c8c;"></div><div style="left:154.2px;top:556.8px;width:4px;height:1.3px;background:#8c8c8c;"></div><div style="left:155.2px;top:568.2px;width:3px;height:1.3px;background:#8c8c8c;"></div><div style="left:143px;top:579.4px;width:16px;height:1.6px;background:#8c8c8c;"></div><div class="t" style="left:146px;top:583.06px;font-size:9.5px;color:#989898;">2</div><div class="t" style="left:146px;top:591.56px;font-size:9.5px;color:#989898;">0</div><div class="t" style="left:146px;top:600.06px;font-size:9.5px;color:#989898;">0</div><div class="t" style="left:146px;top:608.56px;font-size:9.5px;color:#989898;">0</div><div style="left:155.2px;top:590.8px;width:3px;height:1.3px;background:#8c8c8c;"></div><div style="left:154.2px;top:602.2px;width:4px;height:1.3px;background:#8c8c8c;"></div><div style="left:155.2px;top:613.5px;width:3px;height:1.3px;background:#8c8c8c;"></div><div style="left:143px;top:624.8px;width:16px;height:1.6px;background:#8c8c8c;"></div>
<div style="left:1598.5px;top:93px;width:1.5px;height:17px;background:#4f7fd0;"></div>
<div style="left:1596px;top:104px;width:7px;height:1.5px;background:#4f7fd0;"></div>
<div style="left:143px;top:629px;width:16px;height:1.5px;background:#4f7fd0;"></div>
<div style="left:150px;top:626px;width:1.5px;height:8px;background:#4f7fd0;"></div>
<div style="left:442px;top:123.5px;width:877px;height:495.5px;background:#000;"></div>
<div style="left:444.5px;top:126.0px;width:871.5px;height:491px;background:repeating-conic-gradient(#cccccc 0% 25%,#ffffff 0% 50%) 0 0/18.1667px 18.1667px;overflow:hidden;"></div>
<div style="left:226.8px;top:288px;width:217.7px;height:3px;background:#8e846f;"></div>
<div style="left:226.8px;top:288px;width:3px;height:321.5px;background:#8e846f;"></div>
<div style="left:226.8px;top:606.5px;width:217.7px;height:3px;background:#8e846f;"></div>
<div style="left:223.3px;top:284.5px;width:10px;height:10px;background:#b9aa89;box-shadow:0 0 0 1px #3a352b;"></div>
<div style="left:344.6px;top:284.5px;width:10px;height:10px;background:#b9aa89;box-shadow:0 0 0 1px #3a352b;"></div>
<div style="left:223.3px;top:444.3px;width:10px;height:10px;background:#b9aa89;box-shadow:0 0 0 1px #3a352b;"></div>
<div style="left:223.3px;top:603.0px;width:10px;height:10px;background:#b9aa89;box-shadow:0 0 0 1px #3a352b;"></div>
<div style="left:344.6px;top:603.0px;width:10px;height:10px;background:#b9aa89;box-shadow:0 0 0 1px #3a352b;"></div>
<div style="left:466.5px;top:285.5px;width:9px;height:9px;background:#95865f;box-shadow:1px 1px 0 #6f6448;"></div>
<div style="left:466.5px;top:445.5px;width:9px;height:9px;background:#95865f;box-shadow:1px 1px 0 #6f6448;"></div>
<div style="left:466.5px;top:603.5px;width:9px;height:9px;background:#95865f;box-shadow:1px 1px 0 #6f6448;"></div>
<svg style="left:444px;top:306px;" width="20" height="15" viewBox="0 0 20 15"><path d="M0.500 6 L17 1.500 L16 7 L0.500 13 Z" fill="#e9cb6b"/></svg>
<svg style="left:410px;top:428px;" width="56" height="54" viewBox="0 0 56 54"><path d="M7.500 8 H47.500 V46 H7.500 Z" fill="none" stroke="#c05a5a" stroke-width="1.200" stroke-dasharray="3 2"/></svg>
<div style="left:432.5px;top:431.5px;width:9px;height:9px;background:#b23c3c;"></div>
<div style="left:453.0px;top:431.5px;width:9px;height:9px;background:#b23c3c;"></div>
<div style="left:413.0px;top:450.5px;width:9px;height:9px;background:#b23c3c;"></div>
<div style="left:453.0px;top:450.5px;width:9px;height:9px;background:#b23c3c;"></div>
<div style="left:413.0px;top:469.5px;width:9px;height:9px;background:#b23c3c;"></div>
<div style="left:432.5px;top:469.5px;width:9px;height:9px;background:#b23c3c;"></div>
<div style="left:453.0px;top:469.5px;width:9px;height:9px;background:#b23c3c;"></div>
<svg style="left:407px;top:425px;" width="21" height="21" viewBox="0 0 21 21"><path d="M10.500 1 L20 10.500 L10.500 20 L1 10.500 Z" fill="#d9b6ae" stroke="#e6d6d0" stroke-width="1.200"/><circle cx="10.500" cy="10.500" r="3" fill="none" stroke="#c0504a" stroke-width="1.600"/><path d="M10.500 0 V21 M0 10.500 H21" stroke="#c8827a" stroke-width="0.800"/></svg>
<svg style="left:645px;top:391px;" width="18" height="18" viewBox="0 0 18 18"><path d="M9 1.500 L16.500 9 L9 16.500 L1.500 9 Z" fill="none" stroke="#8c8669" stroke-width="1.400"/><circle cx="9" cy="9" r="2.500" fill="#fff" stroke="#8c8669" stroke-width="1"/><path d="M9 0 V18 M0 9 H18" stroke="#a9a48c" stroke-width="0.800"/></svg>
<svg style="left:800px;top:495px;" width="330" height="145" viewBox="0 0 330 145"><defs><linearGradient id="sg" x1="0" y1="0" x2="0" y2="1"><stop offset="0" stop-color="#f6cd84"/><stop offset="0.75" stop-color="#f1c47b"/><stop offset="1" stop-color="#dfae69"/></linearGradient></defs><path d="M140 93 L300 81 L300 85 L230 99 L145 104 Z" fill="#808080" opacity="0.28"/><path d="M187 12 C200 17 220 33 235 44 C255 59 280 71 297 80 C270 87 220 93 178 95 C160 94 145 92 136 90 L136 50 C146 36 163 21 187 12 Z" fill="url(#sg)"/><polygon points="26.5,42.0 146.5,44.0 135.0,122.0 32.0,122.0" fill="#4369c2"/><polygon points="26.5,45.0 146.5,46.0 144.0,66.0 28.5,66.0" fill="#4a73cb"/><polygon points="28.5,65.5 144.0,65.0 142.5,75.5 29.5,76.0" fill="#22379b"/><polygon points="29.5,76.0 39.0,76.0 52.0,101.0 52.0,122.0 32.0,122.0" fill="#2a479f"/><polygon points="118.0,76.0 129.0,76.0 125.0,122.0 114.5,122.0" fill="#79a8e8"/><path d="M43 87 C60 108 90 117 105 122 L88 122 C70 115 52 105 43 87 Z" fill="#22379b"/><path d="M25 41 C50 33.5 120 33.5 146.5 43 C120 49 50 48 25 41 Z" fill="#140f22"/><path d="M27 44 C60 50.5 115 51 146 45.5" fill="none" stroke="#5b8fdc" stroke-width="2"/><path d="M26.5 55 C38 67 42 77 51 84 C68 98 90 108 115 114 C130 118 144 117 142.5 101 L141 93" fill="none" stroke="#4fbf9a" stroke-width="3.600" stroke-linecap="round"/><path d="M21 125 H151" stroke="#46508c" stroke-width="3" stroke-dasharray="5 1.500"/><path d="M21 129 V139 M151 129 V139" stroke="#6a73a8" stroke-width="2.400"/><path d="M32 136.5 H140" stroke="#9a9ab4" stroke-width="2.600"/></svg>
<div style="left:815.5px;top:526.0px;width:11px;height:11px;background:#6178d6;"></div>
<div style="left:945.5px;top:526.0px;width:11px;height:11px;background:#6178d6;"></div>
<div style="left:819.5px;top:541.5px;width:9px;height:9px;background:#6178d6;"></div>
<div style="left:942.0px;top:541.5px;width:9px;height:9px;background:#6178d6;"></div>
<div style="left:819.5px;top:556.0px;width:9px;height:9px;background:#6178d6;"></div>
<div style="left:943.5px;top:555.0px;width:9px;height:9px;background:#6178d6;"></div>
<div style="left:816.0px;top:572.0px;width:10px;height:10px;background:#6178d6;"></div>
<div style="left:943.5px;top:570.5px;width:9px;height:9px;background:#6178d6;"></div>
<div style="left:817.5px;top:587.5px;width:9px;height:9px;background:#6178d6;"></div>
<div style="left:947.5px;top:587.5px;width:9px;height:9px;background:#6178d6;"></div>
<div style="left:881.5px;top:570.5px;width:9px;height:9px;background:#6178d6;"></div>
<div style="left:814.5px;top:615.0px;width:10px;height:10px;background:#6178d6;"></div>
<div style="left:880.5px;top:615.0px;width:10px;height:10px;background:#6178d6;"></div>
<div style="left:946.0px;top:615.0px;width:10px;height:10px;background:#6178d6;"></div>
<div style="left:881px;top:524px;width:10.5px;height:26.5px;background:#6178d6;background-image:radial-gradient(#3a4aa8 1px,transparent 1.3px);background-size:4px 5px;"></div>
<div style="left:850.5px;top:545.2px;width:9px;height:9px;background:#b9bddf;box-shadow:inset 0 0 0 1px #8e97d0;"></div>
<div style="left:850.5px;top:560.5px;width:9px;height:9px;background:#b9bddf;box-shadow:inset 0 0 0 1px #8e97d0;"></div>
<div style="left:850.5px;top:575.5px;width:9px;height:9px;background:#b9bddf;box-shadow:inset 0 0 0 1px #8e97d0;"></div>
<div style="left:850.5px;top:589.0px;width:9px;height:9px;background:#b9bddf;box-shadow:inset 0 0 0 1px #8e97d0;"></div>
<svg style="left:877px;top:550.5px;" width="16" height="16" viewBox="0 0 16 16"><path d="M8 1 L15 8 L8 15 L1 8 Z" fill="none" stroke="#dfe3f4" stroke-width="2"/><circle cx="8" cy="8" r="2.5" fill="none" stroke="#6f80c8" stroke-width="1.5"/><path d="M8 0 V16 M0 8 H16" stroke="#dfe3f4" stroke-width="1" opacity="0.7"/></svg>
<svg style="left:878px;top:584px;" width="16" height="16" viewBox="0 0 16 16"><path d="M8 1 L15 8 L8 15 L1 8 Z" fill="none" stroke="#e6eaf6" stroke-width="2"/><circle cx="8" cy="8" r="2.5" fill="none" stroke="#6f80c8" stroke-width="1.5"/><path d="M8 0 V16 M0 8 H16" stroke="#e6eaf6" stroke-width="1" opacity="0.7"/></svg>
<div style="left:850.5px;top:500.8px;width:9px;height:9px;background:#a9a9cc;"></div>
<div style="left:974.5px;top:500.1px;width:9px;height:9px;background:#a9a9cc;"></div>
<div style="left:1097.9px;top:500.5px;width:9px;height:9px;background:#a9a9cc;"></div>
<div style="left:1109.5px;top:538.9px;width:9px;height:9px;background:#a9a9cc;"></div>
<div style="left:1097.0px;top:545.5px;width:9px;height:9px;background:#a9a9cc;"></div>
<div style="left:1097.9px;top:560.8px;width:9px;height:9px;background:#a9a9cc;"></div>
<div style="left:1109.5px;top:575.0px;width:9px;height:9px;background:#a9a9cc;"></div>
<div style="left:1097.5px;top:576.5px;width:9px;height:9px;background:#a9a9cc;"></div>
<div style="left:1097.9px;top:589.5px;width:9px;height:9px;background:#a9a9cc;"></div>
<div style="left:1109.5px;top:611.1px;width:9px;height:9px;background:#a9a9cc;"></div>
<div style="left:964.0px;top:538.3px;width:9px;height:9px;background:#a9a9cc;"></div>
<div style="left:975.0px;top:561.0px;width:9px;height:9px;background:#a9a9cc;"></div>
<div style="left:974.3px;top:589.2px;width:9px;height:9px;background:#a9a9cc;"></div>
<div style="left:964.0px;top:609.9px;width:9px;height:9px;background:#a9a9cc;"></div>
<svg style="left:963px;top:569px;" width="18" height="18" viewBox="0 0 18 18"><path d="M9 1 L17 9 L9 17 L1 9 Z" fill="none" stroke="#ecdcc4" stroke-width="2"/><circle cx="9" cy="9" r="2.5" fill="none" stroke="#d9c6a6" stroke-width="1.5"/><path d="M9 0 V18 M0 9 H18" stroke="#ecdcc4" stroke-width="1" opacity="0.7"/></svg>
<div style="left:830.5px;top:628px;width:9px;height:7px;background:#c2c2da;"></div>
<div style="left:881.5px;top:628px;width:9px;height:7px;background:#c2c2da;"></div>
<div style="left:932.5px;top:628px;width:9px;height:7px;background:#c2c2da;"></div>
<div style="left:149.5px;top:642px;width:75px;height:19px;background:#1c1c1c;border:1px solid #2b2b2b;"></div>
<div class="t sh" style="left:154px;top:645.50px;font-size:13px;color:#bdbdbd;letter-spacing:0.264px;">(20%)</div>
<svg style="left:210px;top:648px;" width="11" height="8" viewBox="0 0 11 8"><path d="M1.500 1.500 L5.500 5.500 L9.500 1.500" stroke="#bdbdbd" stroke-width="1.600" fill="none"/></svg>
<div style="left:232px;top:644px;width:1px;height:16px;background:#333;"></div>
<div style="left:240px;top:642px;width:94px;height:19px;background:#1c1c1c;border:1px solid #2b2b2b;"></div>
<div class="t sh" style="left:247px;top:645.50px;font-size:13px;color:#cfcfcf;letter-spacing:0.013px;">Full</div>
<svg style="left:320px;top:648px;" width="11" height="8" viewBox="0 0 11 8"><path d="M1.500 1.500 L5.500 5.500 L9.500 1.500" stroke="#bdbdbd" stroke-width="1.600" fill="none"/></svg>
<div style="left:341px;top:644px;width:1px;height:16px;background:#333;"></div>
<svg style="left:352px;top:643px;" width="18" height="18" viewBox="0 0 18 18"><rect x="1.500" y="2" width="14" height="12" fill="none" stroke="#b8b8b8" stroke-width="1.800"/><path d="M8.500 5 V11 M5.500 8 H11.500" stroke="#b8b8b8" stroke-width="1.600"/><path d="M12 13 h4 v3 h-4 z" fill="#b8b8b8"/></svg>
<div style="left:374px;top:641.5px;width:21px;height:20px;background:#141a24;"></div>
<svg style="left:376px;top:644px;" width="18" height="15" viewBox="0 0 18 15"><rect x="1" y="1.500" width="15.500" height="12" fill="none" stroke="#4d7fd6" stroke-width="1.800"/><path d="M5 5 h3.500 v2.500 h-3.500 z M9.500 8 h3.500 v2.500 h-3.500 z M9.500 5 h3.500 v2.500 h-3.500z M5 8 h3.500 v2.500 h-3.500z" fill="#4d7fd6" opacity="0.8"/></svg>
<div style="left:399px;top:641.5px;width:21px;height:20px;background:#141a24;"></div>
<svg style="left:400px;top:643px;" width="19" height="17" viewBox="0 0 19 17"><path d="M3.500 6 L15.500 2.500 L15.500 13 L3.500 13 Z" fill="none" stroke="#4d7fd6" stroke-width="1.800"/><rect x="1.500" y="11" width="4" height="4" fill="#4d7fd6"/><rect x="13.500" y="11" width="4" height="4" fill="#4d7fd6"/><rect x="13.500" y="0.500" width="4" height="4" fill="#4d7fd6"/></svg>
<svg style="left:426px;top:643px;" width="18" height="17" viewBox="0 0 18 17"><rect x="1.500" y="2" width="15" height="12.500" rx="2" fill="none" stroke="#b8b8b8" stroke-width="1.800"/><rect x="4.500" y="6" width="9" height="6" fill="#b8b8b8"/></svg>
<svg style="left:450px;top:642px;" width="19" height="19" viewBox="0 0 19 19"><rect x="1.500" y="2" width="14" height="12" fill="none" stroke="#b8b8b8" stroke-width="1.800"/><path d="M8.500 2 V14 M1.500 8 H15.500" stroke="#222" stroke-width="2"/><path d="M8.500 5 V11 M5.500 8 H11.500" stroke="#b8b8b8" stroke-width="1.400"/><path d="M12.500 15 h5 l-2.500 3 z" fill="#b8b8b8"/></svg>
<div style="left:478px;top:644px;width:1px;height:16px;background:#333;"></div>
<svg style="left:488px;top:643px;" width="17" height="17" viewBox="0 0 17 17"><circle cx="8.500" cy="5" r="3.800" fill="#d24b4b"/><circle cx="5" cy="10.500" r="3.800" fill="#4fae5a"/><circle cx="11.500" cy="10.500" r="3.800" fill="#4d78d8"/><path d="M12 13.500 h5 l-2.500 3 z" fill="#bbb"/></svg>
<svg style="left:513px;top:643px;" width="17" height="17" viewBox="0 0 17 17"><circle cx="8" cy="8.500" r="6.500" fill="none" stroke="#b8b8b8" stroke-width="1.800"/><path d="M8 2 L11 8.500 L5 8.500 Z M8 15 L5 9.500 L11 9.500Z" fill="#b8b8b8"/></svg>
<div class="t sh" style="left:536px;top:645.92px;font-size:12.5px;color:#4d7fd6;letter-spacing:-0.169px;">+0.0</div>
<div style="left:577px;top:644px;width:1px;height:16px;background:#333;"></div>
<svg style="left:587px;top:644px;" width="19" height="15" viewBox="0 0 19 15"><path d="M1 3.500 h4 l1.500 -2.500 h6 l1.500 2.500 h4 v10.500 h-17 z" fill="#b8b8b8"/><circle cx="9.500" cy="8.500" r="3" fill="#222"/></svg>
<svg style="left:611px;top:643px;" width="19" height="17" viewBox="0 0 19 17"><circle cx="7" cy="10" r="4.500" fill="none" stroke="#474747" stroke-width="1.500"/><circle cx="12" cy="6.500" r="4.500" fill="none" stroke="#474747" stroke-width="1.500"/></svg>
<div style="left:638px;top:644px;width:1px;height:16px;background:#333;"></div>
<div style="left:646px;top:642px;width:76px;height:19px;background:#1c1c1c;border:1px solid #2b2b2b;"></div>
<div class="t sh" style="left:654px;top:645.72px;font-size:12.5px;color:#9e9e9e;letter-spacing:-0.008px;">0:00:00:04</div>
<div style="left:730px;top:644px;width:1px;height:16px;background:#333;"></div>
<!-- right -->
<div style="left:1608px;top:32px;width:312px;height:634px;background:#222222;"></div>
<div class="t sh" style="left:1622px;top:40.40px;font-size:13px;color:#cdcdcd;letter-spacing:-0.159px;">Properties: 24 layers selected</div>
<svg style="left:1800.5px;top:42.5px;" width="12" height="12" viewBox="0 0 12 12"><path d="M0 1.500 H11 M0 5.500 H11 M0 9.500 H11" stroke="#cfcfcf" stroke-width="2"/></svg>
<div style="left:1608px;top:63.8px;width:312px;height:2.4px;background:#161616;"></div>
<div class="t sh" style="left:1622px;top:77.00px;font-size:13px;color:#cdcdcd;letter-spacing:0.180px;">Preview</div>
<svg style="left:1681.5px;top:78.5px;" width="12" height="12" viewBox="0 0 12 12"><path d="M0 1.500 H11 M0 5.500 H11 M0 9.500 H11" stroke="#cfcfcf" stroke-width="2"/></svg>
<div style="left:1608px;top:111.2px;width:312px;height:2.4px;background:#161616;"></div>
<div class="t sh" style="left:1614.7px;top:124.30px;font-size:13px;color:#8c8c8c;letter-spacing:-0.528px;">Brushes</div>
<div class="t sh" style="left:1707.5px;top:124.30px;font-size:13px;color:#8c8c8c;letter-spacing:-0.268px;">Paragraph</div>
<div class="t sh" style="left:1814px;top:124.30px;font-size:13px;color:#d2d2d2;letter-spacing:-0.231px;">Character</div>
<svg style="left:1882.5px;top:126px;" width="12" height="12" viewBox="0 0 12 12"><path d="M0 1.500 H11 M0 5.500 H11 M0 9.500 H11" stroke="#cfcfcf" stroke-width="2"/></svg>
<div style="left:1811px;top:142px;width:81px;height:3px;background:#d4d4d4;"></div>
<div style="left:1903px;top:122px;width:1px;height:22px;background:#2a2a2a;"></div>
<div style="left:1615.8px;top:158.3px;width:115px;height:17.5px;background:#171717;border-top:1px solid #2a2a2a;border-bottom:1px solid #2a2a2a;"></div>
<div class="t sh" style="left:1622.5px;top:161.12px;font-size:12.5px;color:#c4c4c4;letter-spacing:-0.063px;">Futura PT</div>
<div style="left:1734px;top:158.3px;width:18px;height:17.5px;background:#1c1c1c;border:1px solid #2b2b2b;"></div>
<svg style="left:1737.5px;top:163.3px;" width="11" height="8" viewBox="0 0 11 8"><path d="M1.500 1.500 L5.500 5.500 L9.500 1.500" stroke="#a8a8a8" stroke-width="1.600" fill="none"/></svg>
<div style="left:1615.8px;top:185.8px;width:115px;height:17.5px;background:#171717;border-top:1px solid #2a2a2a;border-bottom:1px solid #2a2a2a;"></div>
<div class="t sh" style="left:1622.5px;top:188.62px;font-size:12.5px;color:#c4c4c4;letter-spacing:0.508px;">Demi</div>
<div style="left:1734px;top:185.8px;width:18px;height:17.5px;background:#1c1c1c;border:1px solid #2b2b2b;"></div>
<svg style="left:1737.5px;top:190.8px;" width="11" height="8" viewBox="0 0 11 8"><path d="M1.500 1.500 L5.500 5.500 L9.500 1.500" stroke="#a8a8a8" stroke-width="1.600" fill="none"/></svg>
<svg style="left:1757px;top:157px;" width="24" height="22" viewBox="0 0 24 22"><path d="M3 19.500 L4 15.500 L13.500 6 L17 9.500 L7.500 19 Z" fill="none" stroke="#b8b8b8" stroke-width="1.600"/><path d="M13 4.500 L15 2.500 L20.500 8 L18.500 10 Z M15.500 3 a3 3 0 0 1 4.500 4.500" fill="#b8b8b8" stroke="#b8b8b8"/></svg>
<div style="left:1800.8px;top:170.8px;width:33.2px;height:33.2px;background:#ffffff;"></div>
<div style="left:1811px;top:181px;width:13px;height:13px;background:#222;border:1px solid #777;"></div>
<svg style="left:1800.8px;top:170.8px;" width="34" height="34" viewBox="0 0 34 34"><path d="M0.500 33 L33 0.500" stroke="#d0202c" stroke-width="1.800"/></svg>
<div style="left:1786.3px;top:156.3px;width:32.7px;height:32px;background:#15206b;box-shadow:0 0 0 1px #111;"></div>
<svg style="left:1820px;top:157px;" width="14" height="14" viewBox="0 0 14 14"><path d="M3 4.500 C8 3.500 11 6.500 11 12" fill="none" stroke="#c4c4c4" stroke-width="2"/><path d="M0.500 4.500 L5.500 0.500 L5.500 8.500 Z" fill="#c4c4c4"/></svg>
<div style="left:1756.7px;top:183px;width:24.3px;height:21px;background:#ffffff;border:1.500px solid #b8b8b8;border-radius:2px;"></div>
<div style="left:1759.5px;top:187px;width:18.5px;height:7px;background:#000;"></div>
<div style="left:1786.3px;top:190px;width:12.7px;height:12.5px;background:#f4f4f4;border:1px solid #999;"></div>
<svg style="left:1786.3px;top:190px;" width="13" height="13" viewBox="0 0 13 13"><path d="M1 12 L12 1" stroke="#c0606a" stroke-width="1.200"/></svg>
<div style="left:1614px;top:210.5px;width:221px;height:1px;background:#3a3a3a;"></div>
<div class="t sh" style="left:1612.5px;top:224.19px;font-size:11px;color:#c0c0c0;font-weight:bold;font-family:'Liberation Serif',serif;">T</div>
<div class="t sh" style="left:1619px;top:215.72px;font-size:21px;color:#c0c0c0;letter-spacing:1.992px;font-weight:bold;font-family:'Liberation Serif',serif;">T</div>
<div class="t sh" style="left:1641.7px;top:218.42px;font-size:12.5px;color:#5b84d8;letter-spacing:-0.301px;">97</div>
<div class="t" style="left:1660px;top:218.42px;font-size:12.5px;color:#8a8a8a;letter-spacing:-0.101px;">px</div>
<svg style="left:1692px;top:222px;" width="10" height="9" viewBox="0 0 10 9"><path d="M0.500 0.500 H9 L4.750 8.500 Z" fill="#8a8a8a"/></svg>
<svg style="left:1732px;top:215px;" width="20" height="24" viewBox="0 0 20 24"><path d="M10 2 L5.500 10 H14.500 Z M10 13 L5.500 21 H14.500 Z" fill="none" stroke="#c0c0c0" stroke-width="1.500"/><path d="M3 22.500 H17 M3 11.500 H17" stroke="#c0c0c0" stroke-width="1.500"/><path d="M2.500 13 V21 M0.500 15 L2.500 12.500 L4.500 15 M0.500 19 L2.500 21.500 L4.500 19" stroke="#c0c0c0" stroke-width="1" fill="none"/></svg>
<div class="t sh" style="left:1768px;top:218.42px;font-size:12.5px;color:#5b84d8;letter-spacing:-0.101px;">82</div>
<div class="t" style="left:1787.5px;top:218.42px;font-size:12.5px;color:#8a8a8a;letter-spacing:-0.351px;">px</div>
<svg style="left:1820px;top:222px;" width="10" height="9" viewBox="0 0 10 9"><path d="M0.500 0.500 H9 L4.750 8.500 Z" fill="#8a8a8a"/></svg>
<div class="t sh" style="left:1612px;top:239.80px;font-size:15px;color:#c0c0c0;letter-spacing:-0.006px;">V</div>
<div class="t sh" style="left:1619.5px;top:242.80px;font-size:15px;color:#c0c0c0;letter-spacing:0.494px;">A</div>
<svg style="left:1618px;top:255px;" width="16" height="7" viewBox="0 0 16 7"><path d="M2 3.500 H15 M5 0.500 L2 3.500 L5 6.500" stroke="#c0c0c0" stroke-width="1.400" fill="none"/></svg>
<div class="t" style="left:1643.7px;top:241.92px;font-size:12.5px;color:#555;letter-spacing:0.004px;">Metrics</div>
<svg style="left:1692px;top:246px;" width="10" height="9" viewBox="0 0 10 9"><path d="M0.500 0.500 H9 L4.750 8.500 Z" fill="#8a8a8a"/></svg>
<div style="left:1734px;top:241.7px;width:22.7px;height:13.5px;background:#c8c8c8;border-radius:1px;"></div>
<div class="t" style="left:1736px;top:242.84px;font-size:12px;color:#222;letter-spacing:1.610px;font-weight:bold;">VA</div>
<svg style="left:1734px;top:257px;" width="23" height="7" viewBox="0 0 23 7"><path d="M2 3.500 H21 M5 0.500 L2 3.500 L5 6.500 M18 0.500 L21 3.500 L18 6.500" stroke="#c0c0c0" stroke-width="1.400" fill="none"/></svg>
<div class="t sh" style="left:1768.3px;top:241.92px;font-size:12.5px;color:#5b84d8;letter-spacing:-0.051px;">120</div>
<svg style="left:1820px;top:246px;" width="10" height="9" viewBox="0 0 10 9"><path d="M0.500 0.500 H9 L4.750 8.500 Z" fill="#8a8a8a"/></svg>
<div style="left:1614px;top:267.3px;width:221px;height:1px;background:#3a3a3a;"></div>
<svg style="left:1614px;top:275px;" width="19" height="18" viewBox="0 0 19 18"><path d="M0.500 2.500 H18 M0.500 7 H18 M0.500 11.500 H18 M0.500 15.500 H18" stroke="#c0c0c0" stroke-width="2.200"/></svg>
<div class="t" style="left:1642px;top:278.42px;font-size:12.5px;color:#9a9a9a;">-</div>
<div class="t" style="left:1653.3px;top:278.42px;font-size:12.5px;color:#8a8a8a;letter-spacing:0.099px;">px</div>
<svg style="left:1692px;top:280px;" width="10" height="9" viewBox="0 0 10 9"><path d="M0.500 0.500 H9 L4.750 8.500 Z" fill="#8a8a8a"/></svg>
<div style="left:1707.8px;top:275.5px;width:125.5px;height:18px;background:#171717;border-top:1px solid #2a2a2a;border-bottom:1px solid #2a2a2a;"></div>
<svg style="left:1819px;top:281px;" width="11" height="8" viewBox="0 0 11 8"><path d="M1.500 1.500 L5.500 5.500 L9.500 1.500" stroke="#a8a8a8" stroke-width="1.600" fill="none"/></svg>
<div style="left:1614px;top:303px;width:221px;height:1px;background:#3a3a3a;"></div>
<svg style="left:1613px;top:309px;" width="8" height="20" viewBox="0 0 8 20"><path d="M4 1 V18 M1 4 L4 1 L7 4 M1 15 L4 18 L7 15" stroke="#c0c0c0" stroke-width="1.400" fill="none"/></svg>
<div class="t sh" style="left:1620px;top:308.38px;font-size:22px;color:#c0c0c0;letter-spacing:1.326px;font-weight:bold;font-family:'Liberation Serif',serif;">T</div>
<div class="t sh" style="left:1642px;top:311.62px;font-size:12.5px;color:#5b84d8;letter-spacing:-0.285px;">100</div>
<div class="t" style="left:1666.7px;top:311.62px;font-size:12.5px;color:#8a8a8a;letter-spacing:-0.015px;">%</div>
<svg style="left:1692px;top:314.5px;" width="10" height="9" viewBox="0 0 10 9"><path d="M0.500 0.500 H9 L4.750 8.500 Z" fill="#8a8a8a"/></svg>
<div class="t sh" style="left:1735px;top:308.92px;font-size:19px;color:#c0c0c0;letter-spacing:3.326px;font-weight:bold;font-family:'Liberation Serif',serif;">T</div>
<svg style="left:1732px;top:325px;" width="22" height="7" viewBox="0 0 22 7"><path d="M2 3.500 H20 M5 0.500 L2 3.500 L5 6.500 M17 0.500 L20 3.500 L17 6.500" stroke="#c0c0c0" stroke-width="1.400" fill="none"/></svg>
<div class="t sh" style="left:1768.4px;top:311.62px;font-size:12.5px;color:#5b84d8;letter-spacing:-0.085px;">100</div>
<div class="t" style="left:1793.8px;top:311.62px;font-size:12.5px;color:#8a8a8a;letter-spacing:0.085px;">%</div>
<svg style="left:1820px;top:314.5px;" width="10" height="9" viewBox="0 0 10 9"><path d="M0.500 0.500 H9 L4.750 8.500 Z" fill="#8a8a8a"/></svg>
<div class="t sh" style="left:1613px;top:336.30px;font-size:15px;color:#c0c0c0;letter-spacing:-0.006px;">A</div>
<div class="t sh" style="left:1623.5px;top:336.69px;font-size:11px;color:#c0c0c0;">a</div>
<svg style="left:1612px;top:349px;" width="22" height="7" viewBox="0 0 22 7"><path d="M1 1.500 H20 M15 4 L17.500 6.500 L20 4 M17.500 1.500 V6.500" stroke="#c0c0c0" stroke-width="1.400" fill="none"/></svg>
<div class="t sh" style="left:1641.8px;top:336.12px;font-size:12.5px;color:#5b84d8;letter-spacing:-0.351px;">0</div>
<div class="t" style="left:1653.3px;top:336.12px;font-size:12.5px;color:#8a8a8a;letter-spacing:0.099px;">px</div>
<svg style="left:1692px;top:339px;" width="10" height="9" viewBox="0 0 10 9"><path d="M0.500 0.500 H9 L4.750 8.500 Z" fill="#8a8a8a"/></svg>
<svg style="left:1733px;top:336px;" width="22" height="20" viewBox="0 0 22 20"><rect x="3" y="2" width="15" height="11" fill="none" stroke="#c0c0c0" stroke-width="1.300" stroke-dasharray="2.500 1.500"/><path d="M7 10.500 L10.500 4 L14 10.500" stroke="#c0c0c0" stroke-width="1.400" fill="none"/><circle cx="3.500" cy="17" r="1.500" fill="#c0c0c0"/><circle cx="10.500" cy="17" r="1.500" fill="#c0c0c0"/><circle cx="17.500" cy="17" r="1.500" fill="#c0c0c0"/></svg>
<div class="t sh" style="left:1768.4px;top:336.12px;font-size:12.5px;color:#5b84d8;letter-spacing:-0.351px;">0</div>
<div class="t" style="left:1780.4px;top:336.12px;font-size:12.5px;color:#8a8a8a;letter-spacing:-0.515px;">%</div>
<svg style="left:1820px;top:339px;" width="10" height="9" viewBox="0 0 10 9"><path d="M0.500 0.500 H9 L4.750 8.500 Z" fill="#8a8a8a"/></svg>
<div style="left:1614px;top:362.3px;width:221px;height:1px;background:#3a3a3a;"></div>
<div class="t sh" style="left:1642px;top:369.42px;font-size:19px;color:#d0d0d0;letter-spacing:2.326px;font-weight:bold;font-family:'Liberation Serif',serif;">T</div>
<div class="t sh" style="left:1671px;top:369.42px;font-size:19px;color:#d0d0d0;letter-spacing:0.326px;font-weight:bold;font-family:'Liberation Serif',serif;font-style:italic;">T</div>
<div style="left:1699px;top:370px;width:26.5px;height:20px;background:#131313;border:1px solid #2a2a2a;"></div>
<div class="t" style="left:1701px;top:369.42px;font-size:19px;color:#4d7fd6;letter-spacing:-1.424px;font-weight:bold;font-family:'Liberation Serif',serif;">TT</div>
<div class="t sh" style="left:1729.3px;top:369.42px;font-size:19px;color:#d0d0d0;letter-spacing:0.026px;font-weight:bold;font-family:'Liberation Serif',serif;">T</div>
<div class="t sh" style="left:1741.5px;top:373.65px;font-size:14px;color:#d0d0d0;letter-spacing:0.662px;font-weight:bold;font-family:'Liberation Serif',serif;">T</div>
<div class="t sh" style="left:1766.2px;top:369.42px;font-size:19px;color:#d0d0d0;letter-spacing:0.126px;font-weight:bold;font-family:'Liberation Serif',serif;">T</div>
<div class="t" style="left:1779px;top:371.23px;font-size:8px;color:#d0d0d0;font-weight:bold;">1</div>
<div class="t sh" style="left:1793.8px;top:369.42px;font-size:19px;color:#d0d0d0;letter-spacing:0.026px;font-weight:bold;font-family:'Liberation Serif',serif;">T</div>
<div class="t" style="left:1806.5px;top:382.23px;font-size:8px;color:#d0d0d0;font-weight:bold;">1</div>
<div style="left:1620.4px;top:401.8px;width:16.3px;height:16.4px;background:#1e1e1e;border:2px solid #9c9c9c;border-radius:3px;"></div>
<div class="t sh" style="left:1640.7px;top:403.82px;font-size:12.5px;color:#a8a8a8;letter-spacing:0.131px;">Ligatures</div>
<div style="left:1731px;top:401.8px;width:16.3px;height:16.4px;background:#1e1e1e;border:2px solid #9c9c9c;border-radius:3px;"></div>
<div class="t sh" style="left:1751.8px;top:403.82px;font-size:12.5px;color:#a8a8a8;letter-spacing:0.191px;">Hindi Digits</div>
<!-- timeline -->
<div style="left:0px;top:666px;width:1920px;height:414px;background:#222222;"></div>
<div style="left:0px;top:665.5px;width:1920px;height:4px;background:#121212;"></div>
<div style="left:0px;top:669.5px;width:1920px;height:2.3px;background:#4c6a9e;"></div>
<svg style="left:1px;top:681px;" width="12" height="12" viewBox="0 0 12 12"><path d="M0 1.500 H11 M0 5.500 H11 M0 9.500 H11" stroke="#cfcfcf" stroke-width="2"/></svg>
<div style="left:0px;top:696.7px;width:12px;height:3px;background:#d4d4d4;"></div>
<div style="left:51.2px;top:677.4px;width:13.3px;height:13px;background:#b3a184;box-shadow:0 1px 0 #000;"></div>
<div class="t sh" style="left:76.5px;top:679.42px;font-size:12.5px;color:#9c9c9c;letter-spacing:-0.012px;">Side Character</div>
<div style="left:222.2px;top:677.4px;width:13.3px;height:13px;background:#b3a184;box-shadow:0 1px 0 #000;"></div>
<div class="t sh" style="left:247.5px;top:679.42px;font-size:12.5px;color:#9c9c9c;letter-spacing:-0.091px;">Side Character</div>
<div style="left:0px;top:710px;width:330.5px;height:20px;background:#161616;border-top:1px solid #2a2a2a;border-bottom:1px solid #2a2a2a;"></div>
<svg style="left:347px;top:711px;filter:drop-shadow(0 0 0.6px #000);" width="24" height="20" viewBox="0 0 24 20"><path d="M2 5 H15 M8 5 L15 11 M11 8.500 L19 16" stroke="#c2c2c2" stroke-width="1.600" fill="none"/><path d="M1 3 h4 v4 h-4z M14 2.500 h5.500 v4.500 h-5.500z M14.500 8.500 h5.500 v4.500 h-5.500z M17 14 h5.500 v4.500 h-5.500z" fill="#c2c2c2"/></svg>
<svg style="left:387px;top:711px;" width="22" height="19" viewBox="0 0 22 19"><path d="M1 10.500 L11 1.500 L21 10.500 Z" fill="#3f7fdc"/><path d="M11 2 V16 M5 7.500 H17" stroke="#7fb0f0" stroke-width="1.400"/><path d="M1.500 11.500 H20.500 V17.500 H1.500 Z" fill="#2f5fb4"/><path d="M2 10.800 H20" stroke="#16233f" stroke-width="1.200"/></svg>
<svg style="left:417px;top:710px;filter:drop-shadow(0 0 0.6px #000);" width="22" height="21" viewBox="0 0 22 21"><rect x="1.500" y="5" width="10" height="15" fill="#c2c2c2"/><rect x="6" y="1.500" width="14" height="15.500" rx="2" fill="#b4b4b4"/><circle cx="13" cy="9" r="4.300" fill="#8a8a8a" stroke="#d8d8d8" stroke-width="1.200"/><path d="M1.500 5 V20 H12" stroke="#d0d0d0" stroke-width="1" fill="none"/></svg>
<svg style="left:446px;top:710px;filter:drop-shadow(0 0 0.6px #000);" width="22" height="21" viewBox="0 0 22 21"><g transform="rotate(-40 11 10.500)"><rect x="1" y="4.500" width="20" height="12" rx="6" fill="#9c9c9c" stroke="#c2c2c2" stroke-width="1.600"/><circle cx="15" cy="10.500" r="4.200" fill="#7e7e7e" stroke="#d0d0d0" stroke-width="1.200"/><path d="M4 8 a4.500 4.500 0 0 0 0 5 M7.500 7 a5.500 5.500 0 0 0 0 7" stroke="#d8d8d8" stroke-width="1.100" fill="none"/></g></svg>
<svg style="left:484px;top:710px;" width="22" height="20" viewBox="0 0 22 20"><rect x="1.500" y="3.500" width="18" height="15" fill="#181818" stroke="#c2c2c2" stroke-width="2"/><path d="M4 7.500 C10 7.500 10 15.500 17 15.500" stroke="#c2c2c2" stroke-width="1.600" fill="none"/><path d="M4.500 3 V0.500 M8.500 3 V0.500 M12.500 3 V0.500 M16.500 3 V0.500" stroke="#c2c2c2" stroke-width="1.200"/></svg>
<div class="t sh" style="left:215px;top:748.11px;font-size:10.5px;color:#9a9a9a;letter-spacing:-0.066px;">Mode</div>
<div class="t" style="left:260.6px;top:748.11px;font-size:10.5px;color:#6e6e6e;">T</div>
<div class="t sh" style="left:280.6px;top:748.11px;font-size:10.5px;color:#9a9a9a;letter-spacing:-0.247px;">Track Ma...</div>
<div style="left:338.5px;top:746px;width:13px;height:12.5px;background:#d8d8d8;box-shadow:0 1px 0 #111;"></div><svg style="left:338.5px;top:746px;" width="13" height="13" viewBox="0 0 13 13"><circle cx="6.500" cy="6.200" r="3.300" fill="#222"/></svg><div style="left:355.5px;top:746px;width:12.7px;height:12.5px;background:#d8d8d8;box-shadow:0 1px 0 #111;"></div><svg style="left:355.5px;top:746px;" width="13" height="13" viewBox="0 0 13 13"><path d="M2.500 10.500 L10.500 2.500 L10.500 6.500 L6.500 10.500 Z" fill="#222"/><path d="M2 11 L11 2" stroke="#222" stroke-width="1"/></svg>
<div class="t sh" style="left:378px;top:748.11px;font-size:10.5px;color:#9a9a9a;letter-spacing:-0.080px;">Parent &amp; Link</div>
<div style="left:208.5px;top:748px;width:1px;height:12px;background:#3a3a3a;"></div>
<div style="left:371.5px;top:748px;width:1px;height:12px;background:#3a3a3a;"></div>
<div style="left:504.5px;top:748px;width:1px;height:12px;background:#3a3a3a;"></div>
<div style="left:507px;top:744px;width:1px;height:14px;background:#333;"></div>
<div style="left:0px;top:762.8px;width:208.5px;height:18.7px;background:#adadad;border-bottom:1.500px solid #747474;border-top:1px solid #b8b8b8;"></div>
<div style="left:0px;top:766.8px;width:1.5px;height:11px;background:#555;"></div>
<div style="left:214px;top:763.3px;width:36.5px;height:17.5px;background:#1a1a1a;"></div>
<div class="t sh" style="left:221px;top:765.90px;font-size:13px;color:#d2d2d2;letter-spacing:-0.944px;width:12.5px;overflow:hidden;">Nc</div>
<svg style="left:238.5px;top:769.8px;" width="9" height="7" viewBox="0 0 9 7"><path d="M1 1.200 L4.500 4.800 L8 1.200" stroke="#c8c8c8" stroke-width="1.600" fill="none"/></svg>
<div style="left:252.2px;top:763.3px;width:42.6px;height:17.5px;background:#474747;"></div>
<div style="left:258.4px;top:764.8px;width:12.4px;height:13.5px;background:#333;border:1px solid #3f3f3f;"></div>
<svg style="left:277.5px;top:766.0999999999999px;" width="15" height="14" viewBox="0 0 15 14"><path d="M7.200 7.500 a1.800 1.800 0 1 0 -1.800 -1.800 a3.600 3.600 0 1 0 7.200 0 a5.400 5.400 0 1 0 -5.400 5.400" fill="none" stroke="#a4a4a4" stroke-width="1.700" stroke-linecap="round"/><path d="M12.500 4 L14 1" stroke="#a4a4a4" stroke-width="1.300"/></svg>
<div style="left:296.5px;top:763.3px;width:36.5px;height:17.5px;background:#1a1a1a;"></div>
<div class="t sh" style="left:303px;top:765.90px;font-size:13px;color:#d2d2d2;letter-spacing:-0.944px;width:12.5px;overflow:hidden;">Nc</div>
<svg style="left:320px;top:769.8px;" width="9" height="7" viewBox="0 0 9 7"><path d="M1 1.200 L4.500 4.800 L8 1.200" stroke="#c8c8c8" stroke-width="1.600" fill="none"/></svg>
<div style="left:335.5px;top:763.3px;width:62px;height:17.5px;background:#474747;"></div>
<svg style="left:377.5px;top:766.0999999999999px;" width="15" height="14" viewBox="0 0 15 14"><path d="M7.200 7.500 a1.800 1.800 0 1 0 -1.800 -1.800 a3.600 3.600 0 1 0 7.200 0 a5.400 5.400 0 1 0 -5.400 5.400" fill="none" stroke="#a4a4a4" stroke-width="1.700" stroke-linecap="round"/><path d="M12.500 4 L14 1" stroke="#a4a4a4" stroke-width="1.300"/></svg>
<div style="left:399.2px;top:763.3px;width:100.3px;height:17.5px;background:#1a1a1a;"></div>
<div class="t sh" style="left:406.3px;top:765.90px;font-size:13px;color:#d2d2d2;letter-spacing:-0.220px;">None</div>
<svg style="left:485.5px;top:769.8px;" width="9" height="7" viewBox="0 0 9 7"><path d="M1 1.200 L4.500 4.800 L8 1.200" stroke="#c8c8c8" stroke-width="1.600" fill="none"/></svg>
<div style="left:501px;top:763.3px;width:20.5px;height:17.5px;background:#474747;"></div>
<div style="left:521.5px;top:763.3px;width:8.5px;height:17.5px;background:#3a3a3a;"></div>
<div style="left:0px;top:782.0999999999999px;width:208.5px;height:18.7px;background:#adadad;border-bottom:1.500px solid #747474;border-top:1px solid #b8b8b8;"></div>
<div class="t" style="left:4.4px;top:785.24px;font-size:12px;color:#484848;letter-spacing:-0.124px;-webkit-text-stroke:0.3px;">31</div>
<div style="left:214px;top:782.5999999999999px;width:36.5px;height:17.5px;background:#1a1a1a;"></div>
<div class="t sh" style="left:221px;top:785.20px;font-size:13px;color:#d2d2d2;letter-spacing:-0.944px;width:12.5px;overflow:hidden;">Nc</div>
<svg style="left:238.5px;top:789.0999999999999px;" width="9" height="7" viewBox="0 0 9 7"><path d="M1 1.200 L4.500 4.800 L8 1.200" stroke="#c8c8c8" stroke-width="1.600" fill="none"/></svg>
<div style="left:252.2px;top:782.5999999999999px;width:42.6px;height:17.5px;background:#474747;"></div>
<div style="left:258.4px;top:784.0999999999999px;width:12.4px;height:13.5px;background:#333;border:1px solid #3f3f3f;"></div>
<svg style="left:277.5px;top:785.3999999999999px;" width="15" height="14" viewBox="0 0 15 14"><path d="M7.200 7.500 a1.800 1.800 0 1 0 -1.800 -1.800 a3.600 3.600 0 1 0 7.200 0 a5.400 5.400 0 1 0 -5.400 5.400" fill="none" stroke="#a4a4a4" stroke-width="1.700" stroke-linecap="round"/><path d="M12.500 4 L14 1" stroke="#a4a4a4" stroke-width="1.300"/></svg>
<div style="left:296.5px;top:782.5999999999999px;width:36.5px;height:17.5px;background:#1a1a1a;"></div>
<div class="t sh" style="left:303px;top:785.20px;font-size:13px;color:#d2d2d2;letter-spacing:-0.730px;">13</div>
<svg style="left:320px;top:789.0999999999999px;" width="9" height="7" viewBox="0 0 9 7"><path d="M1 1.200 L4.500 4.800 L8 1.200" stroke="#c8c8c8" stroke-width="1.600" fill="none"/></svg>
<div style="left:335.5px;top:782.5999999999999px;width:62px;height:17.5px;background:#474747;"></div>
<div style="left:338.5px;top:784.5999999999999px;width:13px;height:12.5px;background:#d8d8d8;box-shadow:0 1px 0 #111;"></div><svg style="left:338.5px;top:784.5999999999999px;" width="13" height="13" viewBox="0 0 13 13"><circle cx="6.500" cy="6.200" r="3.300" fill="#222"/></svg><div style="left:355.5px;top:784.5999999999999px;width:12.7px;height:12.5px;background:#d8d8d8;box-shadow:0 1px 0 #111;"></div><svg style="left:355.5px;top:784.5999999999999px;" width="13" height="13" viewBox="0 0 13 13"><path d="M2.500 10.500 L10.500 2.500 L10.500 6.500 L6.500 10.500 Z" fill="#222"/><path d="M2 11 L11 2" stroke="#222" stroke-width="1"/></svg>
<svg style="left:377.5px;top:785.3999999999999px;" width="15" height="14" viewBox="0 0 15 14"><path d="M7.200 7.500 a1.800 1.800 0 1 0 -1.800 -1.800 a3.600 3.600 0 1 0 7.200 0 a5.400 5.400 0 1 0 -5.400 5.400" fill="none" stroke="#a4a4a4" stroke-width="1.700" stroke-linecap="round"/><path d="M12.500 4 L14 1" stroke="#a4a4a4" stroke-width="1.300"/></svg>
<div style="left:399.2px;top:782.5999999999999px;width:100.3px;height:17.5px;background:#1a1a1a;"></div>
<div class="t sh" style="left:406.3px;top:785.20px;font-size:13px;color:#d2d2d2;letter-spacing:-0.340px;">14. Layer 32</div>
<svg style="left:485.5px;top:789.0999999999999px;" width="9" height="7" viewBox="0 0 9 7"><path d="M1 1.200 L4.500 4.800 L8 1.200" stroke="#c8c8c8" stroke-width="1.600" fill="none"/></svg>
<div style="left:501px;top:782.5999999999999px;width:20.5px;height:17.5px;background:#474747;"></div>
<div style="left:521.5px;top:782.5999999999999px;width:8.5px;height:17.5px;background:#3a3a3a;"></div>
<div style="left:0px;top:800.4px;width:530px;height:20.3px;background:#232323;border-top:1px solid #0c0c0c;border-bottom:1px solid #0c0c0c;"></div>
<div class="t sh" style="left:215px;top:805.27px;font-size:11.5px;color:#5b84d8;letter-spacing:0.054px;">5315.1</div>
<div class="t" style="left:253.5px;top:805.27px;font-size:11.5px;color:#999;">,</div>
<div class="t sh" style="left:259.5px;top:805.27px;font-size:11.5px;color:#5b84d8;letter-spacing:0.444px;">395.4</div>
<div class="t" style="left:-1px;top:805.27px;font-size:11.5px;color:#aaa;">n</div>
<svg style="left:391.5px;top:804.9px;" width="15" height="14" viewBox="0 0 15 14"><path d="M7.200 7.500 a1.800 1.800 0 1 0 -1.800 -1.800 a3.600 3.600 0 1 0 7.200 0 a5.400 5.400 0 1 0 -5.400 5.400" fill="none" stroke="#b8b8b8" stroke-width="1.700" stroke-linecap="round"/><path d="M12.500 4 L14 1" stroke="#b8b8b8" stroke-width="1.300"/></svg>
<div style="left:0px;top:820.6999999999999px;width:208.5px;height:18.7px;background:#adadad;border-bottom:1.500px solid #747474;border-top:1px solid #b8b8b8;"></div>
<div class="t" style="left:4.4px;top:823.84px;font-size:12px;color:#484848;letter-spacing:-0.124px;-webkit-text-stroke:0.3px;">42</div>
<div style="left:214px;top:821.1999999999999px;width:36.5px;height:17.5px;background:#1a1a1a;"></div>
<div class="t sh" style="left:221px;top:823.80px;font-size:13px;color:#d2d2d2;letter-spacing:-0.944px;width:12.5px;overflow:hidden;">Nc</div>
<svg style="left:238.5px;top:827.6999999999999px;" width="9" height="7" viewBox="0 0 9 7"><path d="M1 1.200 L4.500 4.800 L8 1.200" stroke="#c8c8c8" stroke-width="1.600" fill="none"/></svg>
<div style="left:252.2px;top:821.1999999999999px;width:42.6px;height:17.5px;background:#474747;"></div>
<svg style="left:277.5px;top:823.9999999999999px;" width="15" height="14" viewBox="0 0 15 14"><path d="M7.200 7.500 a1.800 1.800 0 1 0 -1.800 -1.800 a3.600 3.600 0 1 0 7.200 0 a5.400 5.400 0 1 0 -5.400 5.400" fill="none" stroke="#a4a4a4" stroke-width="1.700" stroke-linecap="round"/><path d="M12.500 4 L14 1" stroke="#a4a4a4" stroke-width="1.300"/></svg>
<div style="left:296.5px;top:821.1999999999999px;width:36.5px;height:17.5px;background:#1a1a1a;"></div>
<div class="t sh" style="left:303px;top:823.80px;font-size:13px;color:#d2d2d2;letter-spacing:-0.944px;width:12.5px;overflow:hidden;">Nc</div>
<svg style="left:320px;top:827.6999999999999px;" width="9" height="7" viewBox="0 0 9 7"><path d="M1 1.200 L4.500 4.800 L8 1.200" stroke="#c8c8c8" stroke-width="1.600" fill="none"/></svg>
<div style="left:335.5px;top:821.1999999999999px;width:62px;height:17.5px;background:#474747;"></div>
<svg style="left:377.5px;top:823.9999999999999px;" width="15" height="14" viewBox="0 0 15 14"><path d="M7.200 7.500 a1.800 1.800 0 1 0 -1.800 -1.800 a3.600 3.600 0 1 0 7.200 0 a5.400 5.400 0 1 0 -5.400 5.400" fill="none" stroke="#a4a4a4" stroke-width="1.700" stroke-linecap="round"/><path d="M12.500 4 L14 1" stroke="#a4a4a4" stroke-width="1.300"/></svg>
<div style="left:399.2px;top:821.1999999999999px;width:100.3px;height:17.5px;background:#1a1a1a;"></div>
<div class="t sh" style="left:406.3px;top:823.80px;font-size:13px;color:#d2d2d2;letter-spacing:-0.340px;">14. Layer 32</div>
<svg style="left:485.5px;top:827.6999999999999px;" width="9" height="7" viewBox="0 0 9 7"><path d="M1 1.200 L4.500 4.800 L8 1.200" stroke="#c8c8c8" stroke-width="1.600" fill="none"/></svg>
<div style="left:501px;top:821.1999999999999px;width:20.5px;height:17.5px;background:#474747;"></div>
<div style="left:521.5px;top:821.1999999999999px;width:8.5px;height:17.5px;background:#3a3a3a;"></div>
<div style="left:0px;top:840.0px;width:208.5px;height:18.7px;background:#adadad;border-bottom:1.500px solid #747474;border-top:1px solid #b8b8b8;"></div>
<div class="t" style="left:-1px;top:843.14px;font-size:12px;color:#484848;letter-spacing:0.182px;-webkit-text-stroke:0.3px;">Character 9</div>
<div style="left:214px;top:840.5px;width:36.5px;height:17.5px;background:#1a1a1a;"></div>
<div class="t sh" style="left:221px;top:843.10px;font-size:13px;color:#d2d2d2;letter-spacing:-0.944px;width:12.5px;overflow:hidden;">Nc</div>
<svg style="left:238.5px;top:847.0px;" width="9" height="7" viewBox="0 0 9 7"><path d="M1 1.200 L4.500 4.800 L8 1.200" stroke="#c8c8c8" stroke-width="1.600" fill="none"/></svg>
<div style="left:252.2px;top:840.5px;width:42.6px;height:17.5px;background:#474747;"></div>
<div style="left:258.4px;top:842.0px;width:12.4px;height:13.5px;background:#333;border:1px solid #3f3f3f;"></div>
<svg style="left:277.5px;top:843.3px;" width="15" height="14" viewBox="0 0 15 14"><path d="M7.200 7.500 a1.800 1.800 0 1 0 -1.800 -1.800 a3.600 3.600 0 1 0 7.200 0 a5.400 5.400 0 1 0 -5.400 5.400" fill="none" stroke="#a4a4a4" stroke-width="1.700" stroke-linecap="round"/><path d="M12.500 4 L14 1" stroke="#a4a4a4" stroke-width="1.300"/></svg>
<div style="left:296.5px;top:840.5px;width:36.5px;height:17.5px;background:#1a1a1a;"></div>
<div class="t sh" style="left:303px;top:843.10px;font-size:13px;color:#d2d2d2;letter-spacing:1.079px;">3.</div>
<svg style="left:320px;top:847.0px;" width="9" height="7" viewBox="0 0 9 7"><path d="M1 1.200 L4.500 4.800 L8 1.200" stroke="#c8c8c8" stroke-width="1.600" fill="none"/></svg>
<div style="left:335.5px;top:840.5px;width:62px;height:17.5px;background:#474747;"></div>
<div style="left:338.5px;top:842.5px;width:13px;height:12.5px;background:#d8d8d8;box-shadow:0 1px 0 #111;"></div><svg style="left:338.5px;top:842.5px;" width="13" height="13" viewBox="0 0 13 13"><circle cx="6.500" cy="6.200" r="3.300" fill="#222"/></svg><div style="left:355.5px;top:842.5px;width:12.7px;height:12.5px;background:#d8d8d8;box-shadow:0 1px 0 #111;"></div><svg style="left:355.5px;top:842.5px;" width="13" height="13" viewBox="0 0 13 13"><path d="M2.500 10.500 L10.500 2.500 L10.500 6.500 L6.500 10.500 Z" fill="#222"/><path d="M2 11 L11 2" stroke="#222" stroke-width="1"/></svg>
<svg style="left:377.5px;top:843.3px;" width="15" height="14" viewBox="0 0 15 14"><path d="M7.200 7.500 a1.800 1.800 0 1 0 -1.800 -1.800 a3.600 3.600 0 1 0 7.200 0 a5.400 5.400 0 1 0 -5.400 5.400" fill="none" stroke="#a4a4a4" stroke-width="1.700" stroke-linecap="round"/><path d="M12.500 4 L14 1" stroke="#a4a4a4" stroke-width="1.300"/></svg>
<div style="left:399.2px;top:840.5px;width:100.3px;height:17.5px;background:#1a1a1a;"></div>
<div class="t sh" style="left:406.3px;top:843.10px;font-size:13px;color:#d2d2d2;letter-spacing:-0.222px;">1. Null 51</div>
<svg style="left:485.5px;top:847.0px;" width="9" height="7" viewBox="0 0 9 7"><path d="M1 1.200 L4.500 4.800 L8 1.200" stroke="#c8c8c8" stroke-width="1.600" fill="none"/></svg>
<div style="left:501px;top:840.5px;width:20.5px;height:17.5px;background:#474747;"></div>
<div style="left:521.5px;top:840.5px;width:8.5px;height:17.5px;background:#3a3a3a;"></div>
<div style="left:0px;top:859.3px;width:208.5px;height:18.7px;background:#adadad;border-bottom:1.500px solid #747474;border-top:1px solid #b8b8b8;"></div>
<div class="t" style="left:4.4px;top:862.44px;font-size:12px;color:#484848;letter-spacing:-0.124px;-webkit-text-stroke:0.3px;">40</div>
<div style="left:214px;top:859.8px;width:36.5px;height:17.5px;background:#1a1a1a;"></div>
<div class="t sh" style="left:221px;top:862.40px;font-size:13px;color:#d2d2d2;letter-spacing:-0.944px;width:12.5px;overflow:hidden;">Nc</div>
<svg style="left:238.5px;top:866.3px;" width="9" height="7" viewBox="0 0 9 7"><path d="M1 1.200 L4.500 4.800 L8 1.200" stroke="#c8c8c8" stroke-width="1.600" fill="none"/></svg>
<div style="left:252.2px;top:859.8px;width:42.6px;height:17.5px;background:#474747;"></div>
<svg style="left:277.5px;top:862.5999999999999px;" width="15" height="14" viewBox="0 0 15 14"><path d="M7.200 7.500 a1.800 1.800 0 1 0 -1.800 -1.800 a3.600 3.600 0 1 0 7.200 0 a5.400 5.400 0 1 0 -5.400 5.400" fill="none" stroke="#a4a4a4" stroke-width="1.700" stroke-linecap="round"/><path d="M12.500 4 L14 1" stroke="#a4a4a4" stroke-width="1.300"/></svg>
<div style="left:296.5px;top:859.8px;width:36.5px;height:17.5px;background:#1a1a1a;"></div>
<div class="t sh" style="left:303px;top:862.40px;font-size:13px;color:#d2d2d2;letter-spacing:-0.944px;width:12.5px;overflow:hidden;">Nc</div>
<svg style="left:320px;top:866.3px;" width="9" height="7" viewBox="0 0 9 7"><path d="M1 1.200 L4.500 4.800 L8 1.200" stroke="#c8c8c8" stroke-width="1.600" fill="none"/></svg>
<div style="left:335.5px;top:859.8px;width:62px;height:17.5px;background:#474747;"></div>
<svg style="left:377.5px;top:862.5999999999999px;" width="15" height="14" viewBox="0 0 15 14"><path d="M7.200 7.500 a1.800 1.800 0 1 0 -1.800 -1.800 a3.600 3.600 0 1 0 7.200 0 a5.400 5.400 0 1 0 -5.400 5.400" fill="none" stroke="#a4a4a4" stroke-width="1.700" stroke-linecap="round"/><path d="M12.500 4 L14 1" stroke="#a4a4a4" stroke-width="1.300"/></svg>
<div style="left:399.2px;top:859.8px;width:100.3px;height:17.5px;background:#1a1a1a;"></div>
<div class="t sh" style="left:406.3px;top:862.40px;font-size:13px;color:#d2d2d2;letter-spacing:-0.340px;">14. Layer 32</div>
<svg style="left:485.5px;top:866.3px;" width="9" height="7" viewBox="0 0 9 7"><path d="M1 1.200 L4.500 4.800 L8 1.200" stroke="#c8c8c8" stroke-width="1.600" fill="none"/></svg>
<div style="left:501px;top:859.8px;width:20.5px;height:17.5px;background:#474747;"></div>
<div style="left:521.5px;top:859.8px;width:8.5px;height:17.5px;background:#3a3a3a;"></div>
<div style="left:0px;top:878.5999999999999px;width:208.5px;height:18.7px;background:#adadad;border-bottom:1.500px solid #747474;border-top:1px solid #b8b8b8;"></div>
<div class="t" style="left:-1px;top:881.74px;font-size:12px;color:#484848;letter-spacing:0.182px;-webkit-text-stroke:0.3px;">Character 7</div>
<div style="left:214px;top:879.0999999999999px;width:36.5px;height:17.5px;background:#1a1a1a;"></div>
<div class="t sh" style="left:221px;top:881.70px;font-size:13px;color:#d2d2d2;letter-spacing:-0.944px;width:12.5px;overflow:hidden;">Nc</div>
<svg style="left:238.5px;top:885.5999999999999px;" width="9" height="7" viewBox="0 0 9 7"><path d="M1 1.200 L4.500 4.800 L8 1.200" stroke="#c8c8c8" stroke-width="1.600" fill="none"/></svg>
<div style="left:252.2px;top:879.0999999999999px;width:42.6px;height:17.5px;background:#474747;"></div>
<div style="left:258.4px;top:880.5999999999999px;width:12.4px;height:13.5px;background:#333;border:1px solid #3f3f3f;"></div>
<svg style="left:277.5px;top:881.8999999999999px;" width="15" height="14" viewBox="0 0 15 14"><path d="M7.200 7.500 a1.800 1.800 0 1 0 -1.800 -1.800 a3.600 3.600 0 1 0 7.200 0 a5.400 5.400 0 1 0 -5.400 5.400" fill="none" stroke="#a4a4a4" stroke-width="1.700" stroke-linecap="round"/><path d="M12.500 4 L14 1" stroke="#a4a4a4" stroke-width="1.300"/></svg>
<div style="left:296.5px;top:879.0999999999999px;width:36.5px;height:17.5px;background:#1a1a1a;"></div>
<div class="t sh" style="left:303px;top:881.70px;font-size:13px;color:#d2d2d2;letter-spacing:1.079px;">5.</div>
<svg style="left:320px;top:885.5999999999999px;" width="9" height="7" viewBox="0 0 9 7"><path d="M1 1.200 L4.500 4.800 L8 1.200" stroke="#c8c8c8" stroke-width="1.600" fill="none"/></svg>
<div style="left:335.5px;top:879.0999999999999px;width:62px;height:17.5px;background:#474747;"></div>
<div style="left:338.5px;top:881.0999999999999px;width:13px;height:12.5px;background:#d8d8d8;box-shadow:0 1px 0 #111;"></div><svg style="left:338.5px;top:881.0999999999999px;" width="13" height="13" viewBox="0 0 13 13"><circle cx="6.500" cy="6.200" r="3.300" fill="#222"/></svg><div style="left:355.5px;top:881.0999999999999px;width:12.7px;height:12.5px;background:#d8d8d8;box-shadow:0 1px 0 #111;"></div><svg style="left:355.5px;top:881.0999999999999px;" width="13" height="13" viewBox="0 0 13 13"><path d="M2.500 10.500 L10.500 2.500 L10.500 6.500 L6.500 10.500 Z" fill="#222"/><path d="M2 11 L11 2" stroke="#222" stroke-width="1"/></svg>
<svg style="left:377.5px;top:881.8999999999999px;" width="15" height="14" viewBox="0 0 15 14"><path d="M7.200 7.500 a1.800 1.800 0 1 0 -1.800 -1.800 a3.600 3.600 0 1 0 7.200 0 a5.400 5.400 0 1 0 -5.400 5.400" fill="none" stroke="#a4a4a4" stroke-width="1.700" stroke-linecap="round"/><path d="M12.500 4 L14 1" stroke="#a4a4a4" stroke-width="1.300"/></svg>
<div style="left:399.2px;top:879.0999999999999px;width:100.3px;height:17.5px;background:#1a1a1a;"></div>
<div class="t sh" style="left:406.3px;top:881.70px;font-size:13px;color:#d2d2d2;letter-spacing:-0.222px;">1. Null 51</div>
<svg style="left:485.5px;top:885.5999999999999px;" width="9" height="7" viewBox="0 0 9 7"><path d="M1 1.200 L4.500 4.800 L8 1.200" stroke="#c8c8c8" stroke-width="1.600" fill="none"/></svg>
<div style="left:501px;top:879.0999999999999px;width:20.5px;height:17.5px;background:#474747;"></div>
<div style="left:521.5px;top:879.0999999999999px;width:8.5px;height:17.5px;background:#3a3a3a;"></div>
<div style="left:0px;top:897.9px;width:208.5px;height:18.7px;background:#adadad;border-bottom:1.500px solid #747474;border-top:1px solid #b8b8b8;"></div>
<div class="t" style="left:4.4px;top:901.04px;font-size:12px;color:#484848;letter-spacing:-0.124px;-webkit-text-stroke:0.3px;">38</div>
<div style="left:214px;top:898.4px;width:36.5px;height:17.5px;background:#1a1a1a;"></div>
<div class="t sh" style="left:221px;top:901.00px;font-size:13px;color:#d2d2d2;letter-spacing:-0.944px;width:12.5px;overflow:hidden;">Nc</div>
<svg style="left:238.5px;top:904.9px;" width="9" height="7" viewBox="0 0 9 7"><path d="M1 1.200 L4.500 4.800 L8 1.200" stroke="#c8c8c8" stroke-width="1.600" fill="none"/></svg>
<div style="left:252.2px;top:898.4px;width:42.6px;height:17.5px;background:#474747;"></div>
<svg style="left:277.5px;top:901.1999999999999px;" width="15" height="14" viewBox="0 0 15 14"><path d="M7.200 7.500 a1.800 1.800 0 1 0 -1.800 -1.800 a3.600 3.600 0 1 0 7.200 0 a5.400 5.400 0 1 0 -5.400 5.400" fill="none" stroke="#a4a4a4" stroke-width="1.700" stroke-linecap="round"/><path d="M12.500 4 L14 1" stroke="#a4a4a4" stroke-width="1.300"/></svg>
<div style="left:296.5px;top:898.4px;width:36.5px;height:17.5px;background:#1a1a1a;"></div>
<div class="t sh" style="left:303px;top:901.00px;font-size:13px;color:#d2d2d2;letter-spacing:-0.944px;width:12.5px;overflow:hidden;">Nc</div>
<svg style="left:320px;top:904.9px;" width="9" height="7" viewBox="0 0 9 7"><path d="M1 1.200 L4.500 4.800 L8 1.200" stroke="#c8c8c8" stroke-width="1.600" fill="none"/></svg>
<div style="left:335.5px;top:898.4px;width:62px;height:17.5px;background:#474747;"></div>
<svg style="left:377.5px;top:901.1999999999999px;" width="15" height="14" viewBox="0 0 15 14"><path d="M7.200 7.500 a1.800 1.800 0 1 0 -1.800 -1.800 a3.600 3.600 0 1 0 7.200 0 a5.400 5.400 0 1 0 -5.400 5.400" fill="none" stroke="#a4a4a4" stroke-width="1.700" stroke-linecap="round"/><path d="M12.500 4 L14 1" stroke="#a4a4a4" stroke-width="1.300"/></svg>
<div style="left:399.2px;top:898.4px;width:100.3px;height:17.5px;background:#1a1a1a;"></div>
<div class="t sh" style="left:406.3px;top:901.00px;font-size:13px;color:#d2d2d2;letter-spacing:-0.340px;">14. Layer 32</div>
<svg style="left:485.5px;top:904.9px;" width="9" height="7" viewBox="0 0 9 7"><path d="M1 1.200 L4.500 4.800 L8 1.200" stroke="#c8c8c8" stroke-width="1.600" fill="none"/></svg>
<div style="left:501px;top:898.4px;width:20.5px;height:17.5px;background:#474747;"></div>
<div style="left:521.5px;top:898.4px;width:8.5px;height:17.5px;background:#3a3a3a;"></div>
<div style="left:0px;top:917.1999999999999px;width:208.5px;height:18.7px;background:#adadad;border-bottom:1.500px solid #747474;border-top:1px solid #b8b8b8;"></div>
<div class="t" style="left:-1px;top:920.34px;font-size:12px;color:#484848;letter-spacing:0.182px;-webkit-text-stroke:0.3px;">Character 5</div>
<div style="left:214px;top:917.6999999999999px;width:36.5px;height:17.5px;background:#1a1a1a;"></div>
<div class="t sh" style="left:221px;top:920.30px;font-size:13px;color:#d2d2d2;letter-spacing:-0.944px;width:12.5px;overflow:hidden;">Nc</div>
<svg style="left:238.5px;top:924.1999999999999px;" width="9" height="7" viewBox="0 0 9 7"><path d="M1 1.200 L4.500 4.800 L8 1.200" stroke="#c8c8c8" stroke-width="1.600" fill="none"/></svg>
<div style="left:252.2px;top:917.6999999999999px;width:42.6px;height:17.5px;background:#474747;"></div>
<div style="left:258.4px;top:919.1999999999999px;width:12.4px;height:13.5px;background:#333;border:1px solid #3f3f3f;"></div>
<svg style="left:277.5px;top:920.4999999999999px;" width="15" height="14" viewBox="0 0 15 14"><path d="M7.200 7.500 a1.800 1.800 0 1 0 -1.800 -1.800 a3.600 3.600 0 1 0 7.200 0 a5.400 5.400 0 1 0 -5.400 5.400" fill="none" stroke="#a4a4a4" stroke-width="1.700" stroke-linecap="round"/><path d="M12.500 4 L14 1" stroke="#a4a4a4" stroke-width="1.300"/></svg>
<div style="left:296.5px;top:917.6999999999999px;width:36.5px;height:17.5px;background:#1a1a1a;"></div>
<div class="t sh" style="left:303px;top:920.30px;font-size:13px;color:#d2d2d2;letter-spacing:1.079px;">7.</div>
<svg style="left:320px;top:924.1999999999999px;" width="9" height="7" viewBox="0 0 9 7"><path d="M1 1.200 L4.500 4.800 L8 1.200" stroke="#c8c8c8" stroke-width="1.600" fill="none"/></svg>
<div style="left:335.5px;top:917.6999999999999px;width:62px;height:17.5px;background:#474747;"></div>
<div style="left:338.5px;top:919.6999999999999px;width:13px;height:12.5px;background:#d8d8d8;box-shadow:0 1px 0 #111;"></div><svg style="left:338.5px;top:919.6999999999999px;" width="13" height="13" viewBox="0 0 13 13"><circle cx="6.500" cy="6.200" r="3.300" fill="#222"/></svg><div style="left:355.5px;top:919.6999999999999px;width:12.7px;height:12.5px;background:#d8d8d8;box-shadow:0 1px 0 #111;"></div><svg style="left:355.5px;top:919.6999999999999px;" width="13" height="13" viewBox="0 0 13 13"><path d="M2.500 10.500 L10.500 2.500 L10.500 6.500 L6.500 10.500 Z" fill="#222"/><path d="M2 11 L11 2" stroke="#222" stroke-width="1"/></svg>
<svg style="left:377.5px;top:920.4999999999999px;" width="15" height="14" viewBox="0 0 15 14"><path d="M7.200 7.500 a1.800 1.800 0 1 0 -1.800 -1.800 a3.600 3.600 0 1 0 7.200 0 a5.400 5.400 0 1 0 -5.400 5.400" fill="none" stroke="#a4a4a4" stroke-width="1.700" stroke-linecap="round"/><path d="M12.500 4 L14 1" stroke="#a4a4a4" stroke-width="1.300"/></svg>
<div style="left:399.2px;top:917.6999999999999px;width:100.3px;height:17.5px;background:#1a1a1a;"></div>
<div class="t sh" style="left:406.3px;top:920.30px;font-size:13px;color:#d2d2d2;letter-spacing:-0.222px;">1. Null 51</div>
<svg style="left:485.5px;top:924.1999999999999px;" width="9" height="7" viewBox="0 0 9 7"><path d="M1 1.200 L4.500 4.800 L8 1.200" stroke="#c8c8c8" stroke-width="1.600" fill="none"/></svg>
<div style="left:501px;top:917.6999999999999px;width:20.5px;height:17.5px;background:#474747;"></div>
<div style="left:521.5px;top:917.6999999999999px;width:8.5px;height:17.5px;background:#3a3a3a;"></div>
<div style="left:0px;top:936.5px;width:208.5px;height:18.7px;background:#adadad;border-bottom:1.500px solid #747474;border-top:1px solid #b8b8b8;"></div>
<div class="t" style="left:-1px;top:939.64px;font-size:12px;color:#484848;letter-spacing:-0.151px;-webkit-text-stroke:0.3px;">aracter 4</div>
<div style="left:214px;top:937.0px;width:36.5px;height:17.5px;background:#1a1a1a;"></div>
<div class="t sh" style="left:221px;top:939.60px;font-size:13px;color:#d2d2d2;letter-spacing:-0.944px;width:12.5px;overflow:hidden;">Nc</div>
<svg style="left:238.5px;top:943.5px;" width="9" height="7" viewBox="0 0 9 7"><path d="M1 1.200 L4.500 4.800 L8 1.200" stroke="#c8c8c8" stroke-width="1.600" fill="none"/></svg>
<div style="left:252.2px;top:937.0px;width:42.6px;height:17.5px;background:#474747;"></div>
<div style="left:258.4px;top:938.5px;width:12.4px;height:13.5px;background:#333;border:1px solid #3f3f3f;"></div>
<svg style="left:277.5px;top:939.8px;" width="15" height="14" viewBox="0 0 15 14"><path d="M7.200 7.500 a1.800 1.800 0 1 0 -1.800 -1.800 a3.600 3.600 0 1 0 7.200 0 a5.400 5.400 0 1 0 -5.400 5.400" fill="none" stroke="#a4a4a4" stroke-width="1.700" stroke-linecap="round"/><path d="M12.500 4 L14 1" stroke="#a4a4a4" stroke-width="1.300"/></svg>
<div style="left:296.5px;top:937.0px;width:36.5px;height:17.5px;background:#1a1a1a;"></div>
<div class="t sh" style="left:303px;top:939.60px;font-size:13px;color:#d2d2d2;letter-spacing:-0.944px;width:12.5px;overflow:hidden;">Nc</div>
<svg style="left:320px;top:943.5px;" width="9" height="7" viewBox="0 0 9 7"><path d="M1 1.200 L4.500 4.800 L8 1.200" stroke="#c8c8c8" stroke-width="1.600" fill="none"/></svg>
<div style="left:335.5px;top:937.0px;width:62px;height:17.5px;background:#474747;"></div>
<svg style="left:377.5px;top:939.8px;" width="15" height="14" viewBox="0 0 15 14"><path d="M7.200 7.500 a1.800 1.800 0 1 0 -1.800 -1.800 a3.600 3.600 0 1 0 7.200 0 a5.400 5.400 0 1 0 -5.400 5.400" fill="none" stroke="#a4a4a4" stroke-width="1.700" stroke-linecap="round"/><path d="M12.500 4 L14 1" stroke="#a4a4a4" stroke-width="1.300"/></svg>
<div style="left:399.2px;top:937.0px;width:100.3px;height:17.5px;background:#1a1a1a;"></div>
<div class="t sh" style="left:406.3px;top:939.60px;font-size:13px;color:#d2d2d2;letter-spacing:-0.222px;">1. Null 51</div>
<svg style="left:485.5px;top:943.5px;" width="9" height="7" viewBox="0 0 9 7"><path d="M1 1.200 L4.500 4.800 L8 1.200" stroke="#c8c8c8" stroke-width="1.600" fill="none"/></svg>
<div style="left:501px;top:937.0px;width:20.5px;height:17.5px;background:#474747;"></div>
<div style="left:521.5px;top:937.0px;width:8.5px;height:17.5px;background:#3a3a3a;"></div>
<div style="left:0px;top:955.8px;width:208.5px;height:18.7px;background:#adadad;border-bottom:1.500px solid #747474;border-top:1px solid #b8b8b8;"></div>
<div class="t" style="left:-1px;top:958.94px;font-size:12px;color:#484848;letter-spacing:0.025px;-webkit-text-stroke:0.3px;">ayer 2</div>
<div style="left:214px;top:956.3px;width:36.5px;height:17.5px;background:#1a1a1a;"></div>
<div class="t sh" style="left:221px;top:958.90px;font-size:13px;color:#d2d2d2;letter-spacing:-0.944px;width:12.5px;overflow:hidden;">Nc</div>
<svg style="left:238.5px;top:962.8px;" width="9" height="7" viewBox="0 0 9 7"><path d="M1 1.200 L4.500 4.800 L8 1.200" stroke="#c8c8c8" stroke-width="1.600" fill="none"/></svg>
<div style="left:252.2px;top:956.3px;width:42.6px;height:17.5px;background:#474747;"></div>
<div style="left:258.4px;top:957.8px;width:12.4px;height:13.5px;background:#333;border:1px solid #3f3f3f;"></div>
<svg style="left:277.5px;top:959.0999999999999px;" width="15" height="14" viewBox="0 0 15 14"><path d="M7.200 7.500 a1.800 1.800 0 1 0 -1.800 -1.800 a3.600 3.600 0 1 0 7.200 0 a5.400 5.400 0 1 0 -5.400 5.400" fill="none" stroke="#a4a4a4" stroke-width="1.700" stroke-linecap="round"/><path d="M12.500 4 L14 1" stroke="#a4a4a4" stroke-width="1.300"/></svg>
<div style="left:296.5px;top:956.3px;width:36.5px;height:17.5px;background:#1a1a1a;"></div>
<div class="t sh" style="left:303px;top:958.90px;font-size:13px;color:#d2d2d2;letter-spacing:-0.944px;width:12.5px;overflow:hidden;">Nc</div>
<svg style="left:320px;top:962.8px;" width="9" height="7" viewBox="0 0 9 7"><path d="M1 1.200 L4.500 4.800 L8 1.200" stroke="#c8c8c8" stroke-width="1.600" fill="none"/></svg>
<div style="left:335.5px;top:956.3px;width:62px;height:17.5px;background:#474747;"></div>
<svg style="left:377.5px;top:959.0999999999999px;" width="15" height="14" viewBox="0 0 15 14"><path d="M7.200 7.500 a1.800 1.800 0 1 0 -1.800 -1.800 a3.600 3.600 0 1 0 7.200 0 a5.400 5.400 0 1 0 -5.400 5.400" fill="none" stroke="#a4a4a4" stroke-width="1.700" stroke-linecap="round"/><path d="M12.500 4 L14 1" stroke="#a4a4a4" stroke-width="1.300"/></svg>
<div style="left:399.2px;top:956.3px;width:100.3px;height:17.5px;background:#1a1a1a;"></div>
<div class="t sh" style="left:406.3px;top:958.90px;font-size:13px;color:#d2d2d2;letter-spacing:-0.222px;">1. Null 51</div>
<svg style="left:485.5px;top:962.8px;" width="9" height="7" viewBox="0 0 9 7"><path d="M1 1.200 L4.500 4.800 L8 1.200" stroke="#c8c8c8" stroke-width="1.600" fill="none"/></svg>
<div style="left:501px;top:956.3px;width:20.5px;height:17.5px;background:#474747;"></div>
<div style="left:521.5px;top:956.3px;width:8.5px;height:17.5px;background:#3a3a3a;"></div>
<div style="left:0px;top:974.0999999999999px;width:530px;height:20.3px;background:#232323;border-top:1px solid #0c0c0c;border-bottom:1px solid #0c0c0c;"></div>
<div class="t sh" style="left:215px;top:978.97px;font-size:11.5px;color:#5b84d8;letter-spacing:0.154px;">97.0</div>
<div class="t" style="left:240px;top:978.97px;font-size:11.5px;color:#9a9a9a;letter-spacing:0.275px;">%</div>
<div class="t" style="left:-3px;top:978.97px;font-size:11.5px;color:#aaa;">y</div>
<svg style="left:391.5px;top:978.5999999999999px;" width="15" height="14" viewBox="0 0 15 14"><path d="M7.200 7.500 a1.800 1.800 0 1 0 -1.800 -1.800 a3.600 3.600 0 1 0 7.200 0 a5.400 5.400 0 1 0 -5.400 5.400" fill="none" stroke="#b8b8b8" stroke-width="1.700" stroke-linecap="round"/><path d="M12.500 4 L14 1" stroke="#b8b8b8" stroke-width="1.300"/></svg>
<div style="left:0px;top:994.4px;width:208.5px;height:18.7px;background:#adadad;border-bottom:1.500px solid #747474;border-top:1px solid #b8b8b8;"></div>
<div class="t" style="left:-1px;top:997.54px;font-size:12px;color:#484848;letter-spacing:0.025px;-webkit-text-stroke:0.3px;">ayer 1</div>
<div style="left:214px;top:994.9px;width:36.5px;height:17.5px;background:#1a1a1a;"></div>
<div class="t sh" style="left:221px;top:997.50px;font-size:13px;color:#d2d2d2;letter-spacing:-0.944px;width:12.5px;overflow:hidden;">Nc</div>
<svg style="left:238.5px;top:1001.4px;" width="9" height="7" viewBox="0 0 9 7"><path d="M1 1.200 L4.500 4.800 L8 1.200" stroke="#c8c8c8" stroke-width="1.600" fill="none"/></svg>
<div style="left:252.2px;top:994.9px;width:42.6px;height:17.5px;background:#474747;"></div>
<div style="left:258.4px;top:996.4px;width:12.4px;height:13.5px;background:#333;border:1px solid #3f3f3f;"></div>
<svg style="left:277.5px;top:997.6999999999999px;" width="15" height="14" viewBox="0 0 15 14"><path d="M7.200 7.500 a1.800 1.800 0 1 0 -1.800 -1.800 a3.600 3.600 0 1 0 7.200 0 a5.400 5.400 0 1 0 -5.400 5.400" fill="none" stroke="#a4a4a4" stroke-width="1.700" stroke-linecap="round"/><path d="M12.500 4 L14 1" stroke="#a4a4a4" stroke-width="1.300"/></svg>
<div style="left:296.5px;top:994.9px;width:36.5px;height:17.5px;background:#1a1a1a;"></div>
<div class="t sh" style="left:303px;top:997.50px;font-size:13px;color:#d2d2d2;letter-spacing:-0.944px;width:12.5px;overflow:hidden;">Nc</div>
<svg style="left:320px;top:1001.4px;" width="9" height="7" viewBox="0 0 9 7"><path d="M1 1.200 L4.500 4.800 L8 1.200" stroke="#c8c8c8" stroke-width="1.600" fill="none"/></svg>
<div style="left:335.5px;top:994.9px;width:62px;height:17.5px;background:#474747;"></div>
<svg style="left:377.5px;top:997.6999999999999px;" width="15" height="14" viewBox="0 0 15 14"><path d="M7.200 7.500 a1.800 1.800 0 1 0 -1.800 -1.800 a3.600 3.600 0 1 0 7.200 0 a5.400 5.400 0 1 0 -5.400 5.400" fill="none" stroke="#a4a4a4" stroke-width="1.700" stroke-linecap="round"/><path d="M12.500 4 L14 1" stroke="#a4a4a4" stroke-width="1.300"/></svg>
<div style="left:399.2px;top:994.9px;width:100.3px;height:17.5px;background:#1a1a1a;"></div>
<div class="t sh" style="left:406.3px;top:997.50px;font-size:13px;color:#d2d2d2;letter-spacing:-0.222px;">1. Null 51</div>
<svg style="left:485.5px;top:1001.4px;" width="9" height="7" viewBox="0 0 9 7"><path d="M1 1.200 L4.500 4.800 L8 1.200" stroke="#c8c8c8" stroke-width="1.600" fill="none"/></svg>
<div style="left:501px;top:994.9px;width:20.5px;height:17.5px;background:#474747;"></div>
<div style="left:521.5px;top:994.9px;width:8.5px;height:17.5px;background:#3a3a3a;"></div>
<div style="left:0px;top:1012.6999999999999px;width:530px;height:20.3px;background:#232323;border-top:1px solid #0c0c0c;border-bottom:1px solid #0c0c0c;"></div>
<div class="t sh" style="left:215px;top:1017.57px;font-size:11.5px;color:#5b84d8;letter-spacing:0.154px;">97.0</div>
<div class="t" style="left:240px;top:1017.57px;font-size:11.5px;color:#9a9a9a;letter-spacing:0.275px;">%</div>
<div class="t" style="left:-3px;top:1017.57px;font-size:11.5px;color:#aaa;">y</div>
<svg style="left:391.5px;top:1017.1999999999999px;" width="15" height="14" viewBox="0 0 15 14"><path d="M7.200 7.500 a1.800 1.800 0 1 0 -1.800 -1.800 a3.600 3.600 0 1 0 7.200 0 a5.400 5.400 0 1 0 -5.400 5.400" fill="none" stroke="#b8b8b8" stroke-width="1.700" stroke-linecap="round"/><path d="M12.500 4 L14 1" stroke="#b8b8b8" stroke-width="1.300"/></svg>
<div style="left:0px;top:1033.0px;width:208.5px;height:18.7px;background:#adadad;border-bottom:1.500px solid #747474;border-top:1px solid #b8b8b8;"></div>
<div style="left:214px;top:1033.5px;width:36.5px;height:17.5px;background:#1a1a1a;"></div>
<div class="t sh" style="left:221px;top:1036.10px;font-size:13px;color:#d2d2d2;letter-spacing:-0.944px;width:12.5px;overflow:hidden;">Nc</div>
<svg style="left:238.5px;top:1040.0px;" width="9" height="7" viewBox="0 0 9 7"><path d="M1 1.200 L4.500 4.800 L8 1.200" stroke="#c8c8c8" stroke-width="1.600" fill="none"/></svg>
<div style="left:252.2px;top:1033.5px;width:42.6px;height:17.5px;background:#474747;"></div>
<div style="left:258.4px;top:1035.0px;width:12.4px;height:13.5px;background:#333;border:1px solid #3f3f3f;"></div>
<svg style="left:277.5px;top:1036.3px;" width="15" height="14" viewBox="0 0 15 14"><path d="M7.200 7.500 a1.800 1.800 0 1 0 -1.800 -1.800 a3.600 3.600 0 1 0 7.200 0 a5.400 5.400 0 1 0 -5.400 5.400" fill="none" stroke="#a4a4a4" stroke-width="1.700" stroke-linecap="round"/><path d="M12.500 4 L14 1" stroke="#a4a4a4" stroke-width="1.300"/></svg>
<div style="left:296.5px;top:1033.5px;width:36.5px;height:17.5px;background:#1a1a1a;"></div>
<div class="t sh" style="left:303px;top:1036.10px;font-size:13px;color:#d2d2d2;letter-spacing:-0.944px;width:12.5px;overflow:hidden;">Nc</div>
<svg style="left:320px;top:1040.0px;" width="9" height="7" viewBox="0 0 9 7"><path d="M1 1.200 L4.500 4.800 L8 1.200" stroke="#c8c8c8" stroke-width="1.600" fill="none"/></svg>
<div style="left:335.5px;top:1033.5px;width:62px;height:17.5px;background:#474747;"></div>
<svg style="left:377.5px;top:1036.3px;" width="15" height="14" viewBox="0 0 15 14"><path d="M7.200 7.500 a1.800 1.800 0 1 0 -1.800 -1.800 a3.600 3.600 0 1 0 7.200 0 a5.400 5.400 0 1 0 -5.400 5.400" fill="none" stroke="#a4a4a4" stroke-width="1.700" stroke-linecap="round"/><path d="M12.500 4 L14 1" stroke="#a4a4a4" stroke-width="1.300"/></svg>
<div style="left:399.2px;top:1033.5px;width:100.3px;height:17.5px;background:#1a1a1a;"></div>
<div class="t sh" style="left:406.3px;top:1036.10px;font-size:13px;color:#d2d2d2;letter-spacing:-0.340px;">14. Layer 32</div>
<svg style="left:485.5px;top:1040.0px;" width="9" height="7" viewBox="0 0 9 7"><path d="M1 1.200 L4.500 4.800 L8 1.200" stroke="#c8c8c8" stroke-width="1.600" fill="none"/></svg>
<div style="left:501px;top:1033.5px;width:20.5px;height:17.5px;background:#474747;"></div>
<div style="left:521.5px;top:1033.5px;width:8.5px;height:17.5px;background:#3a3a3a;"></div>
<div style="left:0px;top:1052.3px;width:208.5px;height:18.7px;background:#adadad;border-bottom:1.500px solid #747474;border-top:1px solid #b8b8b8;"></div>
<div class="t" style="left:4.4px;top:1055.44px;font-size:12px;color:#484848;letter-spacing:-0.124px;-webkit-text-stroke:0.3px;">36</div>
<div style="left:214px;top:1052.8px;width:36.5px;height:17.5px;background:#1a1a1a;"></div>
<div class="t sh" style="left:221px;top:1055.40px;font-size:13px;color:#d2d2d2;letter-spacing:-0.944px;width:12.5px;overflow:hidden;">Nc</div>
<svg style="left:238.5px;top:1059.3px;" width="9" height="7" viewBox="0 0 9 7"><path d="M1 1.200 L4.500 4.800 L8 1.200" stroke="#c8c8c8" stroke-width="1.600" fill="none"/></svg>
<div style="left:252.2px;top:1052.8px;width:42.6px;height:17.5px;background:#474747;"></div>
<svg style="left:277.5px;top:1055.6px;" width="15" height="14" viewBox="0 0 15 14"><path d="M7.200 7.500 a1.800 1.800 0 1 0 -1.800 -1.800 a3.600 3.600 0 1 0 7.200 0 a5.400 5.400 0 1 0 -5.400 5.400" fill="none" stroke="#a4a4a4" stroke-width="1.700" stroke-linecap="round"/><path d="M12.500 4 L14 1" stroke="#a4a4a4" stroke-width="1.300"/></svg>
<div style="left:296.5px;top:1052.8px;width:36.5px;height:17.5px;background:#1a1a1a;"></div>
<div class="t sh" style="left:303px;top:1055.40px;font-size:13px;color:#d2d2d2;letter-spacing:-0.944px;width:12.5px;overflow:hidden;">Nc</div>
<svg style="left:320px;top:1059.3px;" width="9" height="7" viewBox="0 0 9 7"><path d="M1 1.200 L4.500 4.800 L8 1.200" stroke="#c8c8c8" stroke-width="1.600" fill="none"/></svg>
<div style="left:335.5px;top:1052.8px;width:62px;height:17.5px;background:#474747;"></div>
<svg style="left:377.5px;top:1055.6px;" width="15" height="14" viewBox="0 0 15 14"><path d="M7.200 7.500 a1.800 1.800 0 1 0 -1.800 -1.800 a3.600 3.600 0 1 0 7.200 0 a5.400 5.400 0 1 0 -5.400 5.400" fill="none" stroke="#a4a4a4" stroke-width="1.700" stroke-linecap="round"/><path d="M12.500 4 L14 1" stroke="#a4a4a4" stroke-width="1.300"/></svg>
<div style="left:399.2px;top:1052.8px;width:100.3px;height:17.5px;background:#1a1a1a;"></div>
<div class="t sh" style="left:406.3px;top:1055.40px;font-size:13px;color:#d2d2d2;letter-spacing:-0.340px;">14. Layer 32</div>
<svg style="left:485.5px;top:1059.3px;" width="9" height="7" viewBox="0 0 9 7"><path d="M1 1.200 L4.500 4.800 L8 1.200" stroke="#c8c8c8" stroke-width="1.600" fill="none"/></svg>
<div style="left:501px;top:1052.8px;width:20.5px;height:17.5px;background:#474747;"></div>
<div style="left:521.5px;top:1052.8px;width:8.5px;height:17.5px;background:#3a3a3a;"></div>
<div style="left:0px;top:1071.6px;width:208.5px;height:18.7px;background:#adadad;border-bottom:1.500px solid #747474;border-top:1px solid #b8b8b8;"></div>
<div style="left:214px;top:1072.1px;width:36.5px;height:17.5px;background:#1a1a1a;"></div>
<div class="t sh" style="left:221px;top:1074.70px;font-size:13px;color:#d2d2d2;letter-spacing:-0.944px;width:12.5px;overflow:hidden;">Nc</div>
<svg style="left:238.5px;top:1078.6px;" width="9" height="7" viewBox="0 0 9 7"><path d="M1 1.200 L4.500 4.800 L8 1.200" stroke="#c8c8c8" stroke-width="1.600" fill="none"/></svg>
<div style="left:252.2px;top:1072.1px;width:42.6px;height:17.5px;background:#474747;"></div>
<svg style="left:277.5px;top:1074.8999999999999px;" width="15" height="14" viewBox="0 0 15 14"><path d="M7.200 7.500 a1.800 1.800 0 1 0 -1.800 -1.800 a3.600 3.600 0 1 0 7.200 0 a5.400 5.400 0 1 0 -5.400 5.400" fill="none" stroke="#a4a4a4" stroke-width="1.700" stroke-linecap="round"/><path d="M12.500 4 L14 1" stroke="#a4a4a4" stroke-width="1.300"/></svg>
<div style="left:296.5px;top:1072.1px;width:36.5px;height:17.5px;background:#1a1a1a;"></div>
<div class="t sh" style="left:303px;top:1074.70px;font-size:13px;color:#d2d2d2;letter-spacing:-0.944px;width:12.5px;overflow:hidden;">Nc</div>
<svg style="left:320px;top:1078.6px;" width="9" height="7" viewBox="0 0 9 7"><path d="M1 1.200 L4.500 4.800 L8 1.200" stroke="#c8c8c8" stroke-width="1.600" fill="none"/></svg>
<div style="left:335.5px;top:1072.1px;width:62px;height:17.5px;background:#474747;"></div>
<svg style="left:377.5px;top:1074.8999999999999px;" width="15" height="14" viewBox="0 0 15 14"><path d="M7.200 7.500 a1.800 1.800 0 1 0 -1.800 -1.800 a3.600 3.600 0 1 0 7.200 0 a5.400 5.400 0 1 0 -5.400 5.400" fill="none" stroke="#a4a4a4" stroke-width="1.700" stroke-linecap="round"/><path d="M12.500 4 L14 1" stroke="#a4a4a4" stroke-width="1.300"/></svg>
<div style="left:399.2px;top:1072.1px;width:100.3px;height:17.5px;background:#1a1a1a;"></div>
<div class="t sh" style="left:406.3px;top:1074.70px;font-size:13px;color:#d2d2d2;letter-spacing:-0.220px;">None</div>
<svg style="left:485.5px;top:1078.6px;" width="9" height="7" viewBox="0 0 9 7"><path d="M1 1.200 L4.500 4.800 L8 1.200" stroke="#c8c8c8" stroke-width="1.600" fill="none"/></svg>
<div style="left:501px;top:1072.1px;width:20.5px;height:17.5px;background:#474747;"></div>
<div style="left:521.5px;top:1072.1px;width:8.5px;height:17.5px;background:#3a3a3a;"></div>
<div style="left:528px;top:708.3px;width:1330px;height:9px;background:#656565;"></div>
<div style="left:522.5px;top:708.3px;width:9px;height:9px;background:#2f86e8;border-radius:5px 0 0 5px;"></div>
<div style="left:1856px;top:708.3px;width:8px;height:9px;background:#2f86e8;border-radius:0 5px 5px 0;"></div>
<div class="t sh" style="left:619.0px;top:720.77px;font-size:11.5px;color:#a4a4a4;letter-spacing:0.352px;">02s</div>
<div style="left:628.1px;top:734px;width:1.5px;height:5.5px;background:#7a7a7a;"></div>
<div class="t sh" style="left:715.8px;top:720.77px;font-size:11.5px;color:#a4a4a4;letter-spacing:0.352px;">04s</div>
<div style="left:724.9px;top:734px;width:1.5px;height:5.5px;background:#7a7a7a;"></div>
<div class="t sh" style="left:812.6px;top:720.77px;font-size:11.5px;color:#a4a4a4;letter-spacing:0.352px;">06s</div>
<div style="left:821.7px;top:734px;width:1.5px;height:5.5px;background:#7a7a7a;"></div>
<div class="t sh" style="left:909.4px;top:720.77px;font-size:11.5px;color:#a4a4a4;letter-spacing:0.352px;">08s</div>
<div style="left:918.5px;top:735px;width:1.6px;height:11px;background:#8a8a8a;"></div>
<div class="t sh" style="left:1006.2px;top:720.77px;font-size:11.5px;color:#a4a4a4;letter-spacing:0.352px;">10s</div>
<div style="left:1015.3px;top:735px;width:1.6px;height:11px;background:#8a8a8a;"></div>
<div class="t sh" style="left:1103.0px;top:720.77px;font-size:11.5px;color:#a4a4a4;letter-spacing:0.352px;">12s</div>
<div style="left:1112.1px;top:735px;width:1.6px;height:11px;background:#8a8a8a;"></div>
<div class="t sh" style="left:1199.8px;top:720.77px;font-size:11.5px;color:#a4a4a4;letter-spacing:0.352px;">14s</div>
<div style="left:1208.9px;top:735px;width:1.6px;height:11px;background:#8a8a8a;"></div>
<div class="t sh" style="left:1296.6px;top:720.77px;font-size:11.5px;color:#a4a4a4;letter-spacing:0.352px;">16s</div>
<div style="left:1305.7px;top:735px;width:1.6px;height:11px;background:#8a8a8a;"></div>
<div class="t sh" style="left:1393.4px;top:720.77px;font-size:11.5px;color:#a4a4a4;letter-spacing:0.352px;">18s</div>
<div style="left:1402.5px;top:735px;width:1.6px;height:11px;background:#8a8a8a;"></div>
<div class="t sh" style="left:1490.2px;top:720.77px;font-size:11.5px;color:#a4a4a4;letter-spacing:0.352px;">20s</div>
<div style="left:1499.3px;top:735px;width:1.6px;height:11px;background:#8a8a8a;"></div>
<div class="t sh" style="left:1587.0px;top:720.77px;font-size:11.5px;color:#a4a4a4;letter-spacing:0.352px;">22s</div>
<div style="left:1596.1px;top:735px;width:1.6px;height:11px;background:#8a8a8a;"></div>
<div class="t sh" style="left:1683.8px;top:720.77px;font-size:11.5px;color:#a4a4a4;letter-spacing:0.352px;">24s</div>
<div style="left:1692.9px;top:735px;width:1.6px;height:11px;background:#8a8a8a;"></div>
<div class="t sh" style="left:1780.6px;top:720.77px;font-size:11.5px;color:#a4a4a4;letter-spacing:0.352px;">26s</div>
<div style="left:1789.7px;top:735px;width:1.6px;height:11px;background:#8a8a8a;"></div>
<div class="t sh" style="left:1877.4px;top:720.77px;font-size:11.5px;color:#a4a4a4;letter-spacing:0.352px;">28s</div>
<div style="left:1886.5px;top:735px;width:1.6px;height:11px;background:#8a8a8a;"></div>
<div class="t sh" style="left:534px;top:720.77px;font-size:11.5px;color:#a4a4a4;letter-spacing:0.152px;">00s</div>
<div style="left:533px;top:741px;width:293.5px;height:16.5px;background:#5b5b5b;"></div>
<div style="left:524px;top:741px;width:8.5px;height:17px;background:#2f86e8;border-radius:5px 0 0 5px;"></div>
<div style="left:826.5px;top:741px;width:6px;height:17px;background:#2f86e8;border-radius:0 5px 5px 0;"></div>
<div style="left:533px;top:758px;width:1387px;height:3.5px;background:#131313;"></div>
<div style="left:533px;top:757.5px;width:274px;height:2px;background:#1d7a22;"></div>
<div style="left:533px;top:759.5px;width:274px;height:2.5px;background:#36c43c;"></div>
<div style="left:524px;top:740px;width:308px;height:1px;background:#111;"></div>
<div style="left:533px;top:763px;width:1387px;height:317px;background:#2b2b2b;"></div>
<div style="left:533px;top:763.6px;width:1387px;height:17.9px;background:linear-gradient(#c88878 0,#a94141 2.500px,#a94141 75%,#9c3c3c 100%);"></div>
<div style="left:533px;top:782.9px;width:1387px;height:17.9px;background:linear-gradient(#8a98e0 0,#6276d6 2px,#5a6ed2 60%,#4d60c6 100%);"></div>
<div style="left:533px;top:802.2px;width:293.5px;height:17.9px;background:#2d2d2d;"></div>
<div style="left:826.5px;top:802.2px;width:1093.5px;height:17.9px;background:#242424;"></div>
<svg style="left:671px;top:804.9px;" width="12" height="12" viewBox="0 0 12 12"><path d="M6 0.500 L11.500 6 L6 11.500 L0.500 6 Z" fill="#d4d4d4"/></svg>
<svg style="left:684.5px;top:804.9px;" width="12" height="12" viewBox="0 0 12 12"><path d="M6 0.500 L11.500 6 L6 11.500 L0.500 6 Z" fill="#d4d4d4"/></svg>
<svg style="left:735px;top:804.9px;" width="12" height="12" viewBox="0 0 12 12"><path d="M6 0.500 L11.500 6 L6 11.500 L0.500 6 Z" fill="#d4d4d4"/></svg>
<svg style="left:749px;top:804.9px;" width="12" height="12" viewBox="0 0 12 12"><path d="M6 0.500 L11.500 6 L6 11.500 L0.500 6 Z" fill="#d4d4d4"/></svg>
<svg style="left:793.2px;top:804.9px;" width="12" height="12" viewBox="0 0 12 12"><path d="M6 0.500 L11.500 6 L6 11.500 L0.500 6 Z" fill="#d4d4d4"/></svg>
<svg style="left:809px;top:804.9px;" width="12" height="12" viewBox="0 0 12 12"><path d="M6 0.500 L11.500 6 L6 11.500 L0.500 6 Z" fill="#9a9a9a"/><path d="M6 0.500 L0.500 6 L6 11.500 Z" fill="#d4d4d4"/></svg>
<div style="left:533px;top:821.5px;width:265.2px;height:17.9px;background:#4c4c4c;"></div>
<div style="left:798.2px;top:821.5px;width:1121.8px;height:17.9px;background:linear-gradient(#8a98e0 0,#6276d6 2px,#5a6ed2 60%,#4d60c6 100%);border-left:2px solid #aab4e8;"></div>
<div style="left:533px;top:840.8px;width:47px;height:17.9px;background:#4c4c4c;"></div>
<div style="left:580px;top:840.8px;width:1340px;height:17.9px;background:linear-gradient(#7c7870 0,#6f6b63 2px,#6f6b63 85%,#66625a 100%);"></div>
<div style="left:798.2px;top:840.8px;width:105.4px;height:17.9px;background:linear-gradient(#bfb29c 0,#a6957b 2px,#a6957b 80%,#98876e 100%);border-left:1.500px solid #cfc4b0;"></div>
<div style="left:533px;top:860.1px;width:293.5px;height:17.9px;background:#4c4c4c;"></div>
<div style="left:826.5px;top:860.1px;width:1093.5px;height:17.9px;background:#434343;"></div>
<div style="left:732.5px;top:860.1px;width:37.5px;height:17.9px;background:linear-gradient(#8a98e0 0,#6276d6 2px,#5a6ed2 60%,#4d60c6 100%);border-left:1.500px solid #aab4e8;"></div>
<div style="left:533px;top:879.4px;width:47px;height:17.9px;background:#4c4c4c;"></div>
<div style="left:580px;top:879.4px;width:1340px;height:17.9px;background:linear-gradient(#7c7870 0,#6f6b63 2px,#6f6b63 85%,#66625a 100%);"></div>
<div style="left:732.5px;top:879.4px;width:37.5px;height:17.9px;background:linear-gradient(#bfb29c 0,#a6957b 2px,#a6957b 80%,#98876e 100%);border-left:1.500px solid #cfc4b0;"></div>
<div style="left:533px;top:898.7px;width:293.5px;height:17.9px;background:#4c4c4c;"></div>
<div style="left:826.5px;top:898.7px;width:1093.5px;height:17.9px;background:#434343;"></div>
<div style="left:672.5px;top:898.7px;width:34.8px;height:17.9px;background:linear-gradient(#8a98e0 0,#6276d6 2px,#5a6ed2 60%,#4d60c6 100%);border-left:1.500px solid #aab4e8;"></div>
<div style="left:533px;top:918.0px;width:47px;height:17.9px;background:#4c4c4c;"></div>
<div style="left:580px;top:918.0px;width:1340px;height:17.9px;background:linear-gradient(#7c7870 0,#6f6b63 2px,#6f6b63 85%,#66625a 100%);"></div>
<div style="left:672.5px;top:918.0px;width:34.8px;height:17.9px;background:linear-gradient(#bfb29c 0,#a6957b 2px,#a6957b 80%,#98876e 100%);border-left:1.500px solid #cfc4b0;"></div>
<div style="left:580px;top:937.3px;width:1340px;height:17.9px;background:linear-gradient(#7c7870 0,#6f6b63 2px,#6f6b63 85%,#66625a 100%);"></div>
<div style="left:533px;top:937.3px;width:46.5px;height:17.9px;background:linear-gradient(#bfb29c 0,#a6957b 2px,#a6957b 80%,#98876e 100%);"></div>
<div style="left:533px;top:956.6px;width:1387px;height:17.9px;background:linear-gradient(#8a98e0 0,#6276d6 2px,#5a6ed2 60%,#4d60c6 100%);"></div>
<div style="left:533px;top:975.9px;width:293.5px;height:17.9px;background:#2d2d2d;"></div>
<div style="left:826.5px;top:975.9px;width:1093.5px;height:17.9px;background:#242424;"></div>
<svg style="left:538px;top:978.3px;" width="146" height="13" viewBox="0 0 146 13"><path d="M3 1.500 H138 L143.500 6.500 L138 11.500 H3 L1.500 6.500 Z" fill="#c9c9c9"/><path d="M138 1.500 L143.500 6.500 L138 11.500 Z" fill="#8e8e8e"/><path d="M3 0.700 H138 M3 12.300 H138" stroke="#0c0c0c" stroke-width="1" stroke-dasharray="5 3"/></svg>
<div style="left:533px;top:995.2px;width:1387px;height:17.9px;background:linear-gradient(#8a98e0 0,#6276d6 2px,#5a6ed2 60%,#4d60c6 100%);"></div>
<div style="left:533px;top:1014.5px;width:293.5px;height:17.9px;background:#2d2d2d;"></div>
<div style="left:826.5px;top:1014.5px;width:1093.5px;height:17.9px;background:#242424;"></div>
<svg style="left:538px;top:1016.9px;" width="146" height="13" viewBox="0 0 146 13"><path d="M3 1.500 H138 L143.500 6.500 L138 11.500 H3 L1.500 6.500 Z" fill="#c9c9c9"/><path d="M138 1.500 L143.500 6.500 L138 11.500 Z" fill="#8e8e8e"/><path d="M3 0.700 H138 M3 12.300 H138" stroke="#0c0c0c" stroke-width="1" stroke-dasharray="5 3"/></svg>
<div style="left:533px;top:1033.8px;width:1387px;height:17.9px;background:linear-gradient(#b8b4d8 0,#a5a1cb 3px,#a5a1cb 70%,#9892c0 100%);"></div>
<div style="left:533px;top:1053.1px;width:1387px;height:17.9px;background:linear-gradient(#8a98e0 0,#6276d6 2px,#5a6ed2 60%,#4d60c6 100%);"></div>
<div style="left:533px;top:1072.4px;width:1387px;height:17.9px;background:linear-gradient(#8a98e0 0,#6276d6 2px,#5a6ed2 60%,#4d60c6 100%);"></div>
<div style="left:536.8px;top:784px;width:4.8px;height:296px;background:#c84444;opacity:0.45;"></div>
<div style="left:531px;top:735px;width:2.5px;height:345px;background:#5b8dd0;"></div>
<svg style="left:524px;top:719.5px;" width="16" height="20" viewBox="0 0 16 20"><path d="M1 1 H14.500 V9 L7.800 19 L1 9 Z" fill="#2f86e8"/></svg>
</div>
</body></html>
